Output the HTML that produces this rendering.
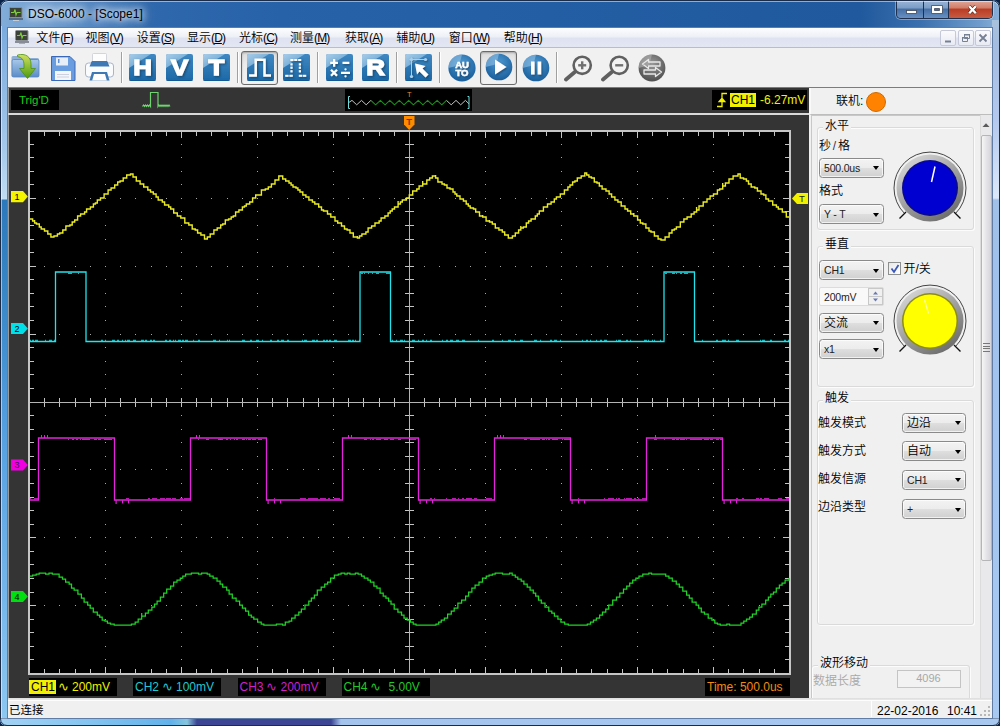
<!DOCTYPE html>
<html lang="zh">
<head>
<meta charset="utf-8">
<title>DSO-6000 - [Scope1]</title>
<style>
*{box-sizing:border-box;margin:0;padding:0}
html,body{width:1000px;height:726px;overflow:hidden;background:#0b2248}
body{font-family:"Liberation Sans","Noto Sans CJK SC",sans-serif;font-size:12px;color:#000;position:relative}
.abs{position:absolute}
#win{position:absolute;left:0;top:0;width:1000px;height:726px;border-radius:8px 8px 7px 7px;
 background:linear-gradient(90deg,#82acd9 0,#6d9cce 5%,#4c82be 10%,#2f68ac 15%,#2761a8 28%,#235da3 55%,#20599d 86%,#3a70ae 92%,#6f9ccc 98%,#8ab0d8 100%);
 overflow:hidden}
#frameL{left:0;top:26px;width:8px;height:700px;background:linear-gradient(180deg,#7aaade 0,#a4c8ea 120px,#c0dcf2 172px,#c4e0f4 173px,#2c78ba 174px,#3e8ccc 300px,#58a2e2 420px,#8ec8f2 100%)}
#frameL:before{content:'';position:absolute;left:1px;top:0;width:1px;height:700px;background:rgba(255,255,255,.5)}
#frameL:after{content:'';position:absolute;left:7px;top:1px;width:1px;height:692px;background:#4a6a94}
#frameR{left:992px;top:20px;width:8px;height:706px;background:linear-gradient(180deg,#a9c2dc 0,#a4bce0 25px,#b4c8ee 100px,#dce8fa 178px,#a0c0ea 180px,#a2c4ee 420px,#a8caf2 100%)}
#frameR:before{content:'';position:absolute;right:0;top:0;width:1px;height:706px;background:#1b2c48}
#frameB{left:1px;top:718px;width:998px;height:8px;border-top:1px solid #7c94b4;border-bottom:1px solid #1b2c48;background:linear-gradient(90deg,#a2d2f4 0,#84c4f0 90px,#62b2ea 170px,#86c6dc 186px,#3c4494 196px,#3c4494 330px,#a4c4ee 340px,#a8c8f0 100%)}
#title{left:28px;top:6px;font-size:12px;line-height:16px;color:#000;text-shadow:0 0 6px #fff,0 0 10px #fff,0 0 14px rgba(255,255,255,.9)}
#client{left:7px;top:27px;width:986px;height:692px;background:#f0f0f0;border:1px solid #5f7ca4}
/* menu */
#menu{left:8px;top:28px;width:984px;height:20px;background:linear-gradient(180deg,#fdfdfe 0,#eef0f8 45%,#dfe3f1 55%,#e3e6f3 100%);border-bottom:1px solid #b8bccb}
#menu span{position:absolute;top:2px;line-height:16px;font-size:12px;white-space:nowrap}
#menu u{text-decoration:underline}
#menu b{font-weight:normal;font-size:12px;letter-spacing:-.9px;position:relative;top:-.5px}
#menu span{font-weight:350}
/* toolbar */
#tool{left:8px;top:48px;width:984px;height:40px;background:#f1f1f2;border-bottom:1px solid #7c7c7c}
.sep{position:absolute;top:4px;width:2px;height:31px;border-left:1px solid #a0a0a0;border-right:1px solid #fff}
.pressed{border:1px solid #6a6a6a;border-radius:3px;background:linear-gradient(180deg,#dcdcdc,#ececec 40%,#f2f2f2);box-shadow:inset 0 1px 2px rgba(0,0,0,.25)}
.mdi{position:absolute;top:30px;width:16px;height:16px;border:1px solid #c4c8d8;border-radius:2px;background:linear-gradient(180deg,#fbfbfd,#e8eaf4)}
.mdi svg{position:absolute;left:0;top:0}
/* scope */
#scope{left:8px;top:88px;width:801px;height:610px;background:#343434}
#scope svg.plot{position:absolute;left:0;top:0}
.lbl{position:absolute;background:#000;height:18px;line-height:18px;font-size:12px;white-space:nowrap}
/* right panel */
#panel{left:809px;top:88px;width:183px;height:610px;background:#f0f0f0}

.cj{font-size:12px;font-weight:350}
.grp{position:absolute;border:1px solid #dadada;border-radius:3px;box-shadow:inset 1px 1px 0 #fcfcfc,1px 1px 0 #fcfcfc}
.gl{position:absolute;background:#f0f0f0;padding:0 2px;line-height:16px}
.combo{position:absolute;width:65px;height:20px;border:1px solid #8a8a8a;border-radius:3.500px;background:linear-gradient(180deg,#f3f3f3 0,#ececec 48%,#dedede 52%,#d0d0d0 100%);box-shadow:inset 0 0 0 1px rgba(255,255,255,.7)}
.combo span{position:absolute;left:4px;top:1px;line-height:16px;font-size:10.500px;letter-spacing:-.2px;color:#222}
.combo.cj span{font-size:12px;letter-spacing:0;color:#000;font-weight:350}
.combo i{position:absolute;right:4.500px;top:7.500px;width:0;height:0;border-left:3.800px solid transparent;border-right:3.800px solid transparent;border-top:4.200px solid #000}
.tl{font-size:13px}
/* status bar */
#status{left:8px;top:698px;width:984px;height:20px;background:linear-gradient(180deg,#dcdcdc 0,#e6e6e6 1.500px,#fdfdfd 2px,#fdfdfd 3px,#f0f0f0 3px)}
#status span{font-weight:350}
</style>
</head>
<body>
<div id="win">
<div id="frameL" class="abs"></div><div id="frameR" class="abs"></div><div id="frameB" class="abs"></div>
<div id="title" class="abs">DSO-6000 - [Scope1]</div>
<div id="client" class="abs"></div>
<div id="menu" class="abs">
<span style="left:28.2px">文件<b>(<u>F</u>)</b></span>
<span style="left:77.5px">视图<b>(<u>V</u>)</b></span>
<span style="left:128.8px">设置<b>(<u>S</u>)</b></span>
<span style="left:179.0px">显示<b>(<u>D</u>)</b></span>
<span style="left:231.0px">光标<b>(<u>C</u>)</b></span>
<span style="left:282.0px">测量<b>(<u>M</u>)</b></span>
<span style="left:337.0px">获取<b>(<u>A</u>)</b></span>
<span style="left:388.2px">辅助<b>(<u>U</u>)</b></span>
<span style="left:440.8px">窗口<b>(<u>W</u>)</b></span>
<span style="left:495.8px">帮助<b>(<u>H</u>)</b></span>
</div>
<div id="tool" class="abs">
<svg width="0" height="0" style="position:absolute"><defs>
<linearGradient id="bq" x1="0" y1="0" x2="0" y2="1"><stop offset="0" stop-color="#3f88c2"/><stop offset="1" stop-color="#1c68a6"/></linearGradient>
<linearGradient id="bq2" x1="0" y1="0" x2="1" y2="1"><stop offset="0" stop-color="#b4d4ec"/><stop offset="1" stop-color="#5a9fd0"/></linearGradient>
<radialGradient id="bc" cx="0.5" cy="0.35" r="0.7"><stop offset="0" stop-color="#4f9ad2"/><stop offset="1" stop-color="#155a98"/></radialGradient>
<radialGradient id="gc" cx="0.5" cy="0.35" r="0.7"><stop offset="0" stop-color="#9a9a9a"/><stop offset="1" stop-color="#4a4a4a"/></radialGradient>
<linearGradient id="fold" x1="0" y1="0" x2="0" y2="1"><stop offset="0" stop-color="#a8c8e8"/><stop offset="1" stop-color="#5a8cc8"/></linearGradient>
<linearGradient id="garr" x1="0" y1="0" x2="0" y2="1"><stop offset="0" stop-color="#d0e060"/><stop offset="1" stop-color="#4c9a10"/></linearGradient>
<filter id="ds" x="-20%" y="-20%" width="150%" height="150%"><feDropShadow dx="1" dy="1.2" stdDeviation="0.8" flood-color="#0a3050" flood-opacity="0.7"/></filter>
<filter id="soft" x="-10%" y="-10%" width="120%" height="120%"><feGaussianBlur stdDeviation="0.6"/></filter>
</defs></svg>
<svg class="abs" style="left:2px;top:3px" width="32" height="30" viewBox="0 0 32 30"><path d="M1.500 6.500a1.500 1.500 0 0 1 1.500-1.500h8l2 2h14.500a1.500 1.500 0 0 1 1.500 1.500v16a1.500 1.500 0 0 1-1.500 1.500h-24.500a1.500 1.500 0 0 1-1.500-1.500z" fill="#8fb0d4"/><rect x="2" y="8.500" width="27" height="17.500" rx="1.500" fill="url(#fold)" stroke="#5a86bc" stroke-width=".8"/><path d="M7.500 4c8-2 13.500 1.500 13.500 9.500v4h4.500l-8 10-8-10h4.500v-3.500c0-5-2-7.500-6.500-8.500z" fill="url(#garr)" stroke="#4a9010" stroke-width=".8"/></svg>
<svg class="abs" style="left:42px;top:7px" width="28" height="28" viewBox="0 0 28 28"><path d="M1.500 1.500h18.500l5 5v19h-23.500z" fill="#6a9ce0" stroke="#3a68b8" stroke-width="1"/><rect x="6" y="2.500" width="12" height="8" fill="#e8eef8"/><rect x="8" y="4" width="1.500" height="4" fill="#5b8fd8"/><rect x="5" y="16" width="16" height="9" fill="#f4f6fa"/><path d="M7 19.500h12M7 22h12" stroke="#c0c8d8" stroke-width=".8"/></svg>
<svg class="abs" style="left:76px;top:4px" width="32" height="30" viewBox="0 0 32 30"><rect x="1.500" y="11" width="28" height="14" rx="3" fill="#fafbfd" stroke="#a8b4c8" stroke-width="1"/><rect x="8.500" y="1.500" width="14" height="9" rx="1" fill="#fdfdfd" stroke="#c8ccd4" stroke-width=".8"/><path d="M7 11c0-1.500 1-2 2-2h13c1 0 2 0.500 2 2l1.500 3.500h-20z" fill="#3d78b4"/><path d="M8 20h15l2.500 8.500h-20z" fill="#3d78b4"/><path d="M10 22h11l1.800 6.500h-14.600z" fill="#fdfdfd"/></svg>
<div class="sep" style="left:112.5px"></div>
<svg class="abs" style="left:118.0px;top:3.0px" width="33" height="33" viewBox="-3 -3 33 33"><rect x="0" y="0" width="27" height="27" rx="2" fill="url(#bq)" filter="url(#soft)"/><path d="M0 2a2 2 0 0 1 2-2h20L0 14z" fill="url(#bq2)" opacity=".9" filter="url(#soft)"/><path d="M0.500 26.500h26" stroke="#0e4f86" stroke-width="1" opacity=".6"/><g transform="translate(13.5 21.4) scale(1.15 1)"><text x="0" y="0" font-family="Liberation Sans, sans-serif" font-weight="bold" font-size="22.5" text-anchor="middle" fill="#fff" stroke="#fff" stroke-width="1.300" filter="url(#ds)">H</text></g></svg>
<svg class="abs" style="left:155.0px;top:3.0px" width="33" height="33" viewBox="-3 -3 33 33"><rect x="0" y="0" width="27" height="27" rx="2" fill="url(#bq)" filter="url(#soft)"/><path d="M0 2a2 2 0 0 1 2-2h20L0 14z" fill="url(#bq2)" opacity=".9" filter="url(#soft)"/><path d="M0.500 26.500h26" stroke="#0e4f86" stroke-width="1" opacity=".6"/><g transform="translate(13.5 21.4) scale(1.15 1)"><text x="0" y="0" font-family="Liberation Sans, sans-serif" font-weight="bold" font-size="22.5" text-anchor="middle" fill="#fff" stroke="#fff" stroke-width="1.300" filter="url(#ds)">V</text></g></svg>
<svg class="abs" style="left:192.0px;top:3.0px" width="33" height="33" viewBox="-3 -3 33 33"><rect x="0" y="0" width="27" height="27" rx="2" fill="url(#bq)" filter="url(#soft)"/><path d="M0 2a2 2 0 0 1 2-2h20L0 14z" fill="url(#bq2)" opacity=".9" filter="url(#soft)"/><path d="M0.500 26.500h26" stroke="#0e4f86" stroke-width="1" opacity=".6"/><g transform="translate(13.5 21.4) scale(1.15 1)"><text x="0" y="0" font-family="Liberation Sans, sans-serif" font-weight="bold" font-size="22.5" text-anchor="middle" fill="#fff" stroke="#fff" stroke-width="1.300" filter="url(#ds)">T</text></g></svg>
<div class="sep" style="left:229.1px"></div>
<div class="abs pressed" style="left:233.0px;top:2.5px;width:37px;height:34px"></div>
<svg class="abs" style="left:236.0px;top:3.0px" width="33" height="33" viewBox="-3 -3 33 33"><rect x="0" y="0" width="27" height="27" rx="2" fill="url(#bq)" filter="url(#soft)"/><path d="M0 2a2 2 0 0 1 2-2h20L0 14z" fill="url(#bq2)" opacity=".9" filter="url(#soft)"/><path d="M0.500 26.500h26" stroke="#0e4f86" stroke-width="1" opacity=".6"/><path d="M2 21.400H8.700V5.800H17.500V21.400H24" fill="none" stroke="#fff" stroke-width="2.500" filter="url(#ds)"/></svg>
<svg class="abs" style="left:272.0px;top:3.0px" width="33" height="33" viewBox="-3 -3 33 33"><rect x="0" y="0" width="27" height="27" rx="2" fill="url(#bq)" filter="url(#soft)"/><path d="M0 2a2 2 0 0 1 2-2h20L0 14z" fill="url(#bq2)" opacity=".9" filter="url(#soft)"/><path d="M0.500 26.500h26" stroke="#0e4f86" stroke-width="1" opacity=".6"/><g filter="url(#ds)" fill="#fff"><rect x="7.400" y="5" width="3" height="2"/><rect x="11.300" y="5" width="3" height="2"/><rect x="15.200" y="5" width="3" height="2"/><rect x="7.400" y="9.300" width="2.200" height="2.200"/><rect x="7.400" y="12.600" width="2.200" height="2.200"/><rect x="7.400" y="16.200" width="2.200" height="2.200"/><rect x="15.800" y="9.300" width="2.200" height="2.200"/><rect x="15.800" y="12.600" width="2.200" height="2.200"/><rect x="15.800" y="16.200" width="2.200" height="2.200"/><rect x="2.200" y="20.800" width="3.400" height="2"/><rect x="6.400" y="20.800" width="3.400" height="2"/><rect x="15.800" y="20.800" width="3.400" height="2"/><rect x="19.800" y="20.800" width="3.400" height="2"/></g></svg>
<div class="sep" style="left:309.1px"></div>
<svg class="abs" style="left:314.5px;top:3.0px" width="33" height="33" viewBox="-3 -3 33 33"><rect x="0" y="0" width="27" height="27" rx="2" fill="url(#bq)" filter="url(#soft)"/><path d="M0 2a2 2 0 0 1 2-2h20L0 14z" fill="url(#bq2)" opacity=".9" filter="url(#soft)"/><path d="M0.500 26.500h26" stroke="#0e4f86" stroke-width="1" opacity=".6"/><g stroke="#fff" stroke-width="2.200" filter="url(#ds)" fill="#fff"><path d="M4.200 8.800h7.800M8.100 4.900v7.800M16.500 8.800h6.800M5 15.800l6 6M11 15.800l-6 6M15 18.800h9"/><circle cx="19.500" cy="15.300" r="1.100" stroke="none"/><circle cx="19.500" cy="22.300" r="1.100" stroke="none"/></g></svg>
<svg class="abs" style="left:351.4px;top:3.0px" width="33" height="33" viewBox="-3 -3 33 33"><rect x="0" y="0" width="27" height="27" rx="2" fill="url(#bq)" filter="url(#soft)"/><path d="M0 2a2 2 0 0 1 2-2h20L0 14z" fill="url(#bq2)" opacity=".9" filter="url(#soft)"/><path d="M0.500 26.500h26" stroke="#0e4f86" stroke-width="1" opacity=".6"/><g transform="translate(13.5 21.4) scale(1.15 1)"><text x="0" y="0" font-family="Liberation Sans, sans-serif" font-weight="bold" font-size="22.5" text-anchor="middle" fill="#fff" stroke="#fff" stroke-width="1.300" filter="url(#ds)">R</text></g></svg>
<div class="sep" style="left:387.9px"></div>
<svg class="abs" style="left:394.0px;top:3.0px" width="33" height="33" viewBox="-3 -3 33 33"><rect x="0" y="0" width="27" height="27" rx="2" fill="url(#bq)" filter="url(#soft)"/><path d="M0 2a2 2 0 0 1 2-2h20L0 14z" fill="url(#bq2)" opacity=".9" filter="url(#soft)"/><path d="M0.500 26.500h26" stroke="#0e4f86" stroke-width="1" opacity=".6"/><g filter="url(#ds)"><path d="M6.500 3.500v20M4.500 5.500h17" stroke="#a8d0ec" stroke-width="1" fill="none"/><circle cx="6.500" cy="5.500" r="1.600" fill="#a8d0ec"/><circle cx="20.500" cy="5.500" r="1.600" fill="#a8d0ec"/><circle cx="6.500" cy="22.500" r="1.600" fill="#a8d0ec"/><path d="M10 9.500l10.500 2.500-3 2.500 6 6-3 3-6-6-2.500 3z" fill="#fff"/></g></svg>
<div class="sep" style="left:431.1px"></div>
<svg class="abs" style="left:438.0px;top:4.3px" width="32" height="32" viewBox="-16 -16 32 32"><circle r="13.6" fill="url(#bc)"/><path d="M-13.60 0.00A13.6 13.6 0 0 1 0.00 -13.60L-2.72 -2.72z" fill="#9cc8ea" opacity=".55"/><g font-family="Liberation Sans, sans-serif" font-weight="bold" font-size="9.500" text-anchor="middle" fill="#fff" stroke="#fff" stroke-width=".5" filter="url(#ds)"><text x="0" y="-0.500">AU</text><text x="0" y="7.500">TO</text></g></svg>
<div class="abs pressed" style="left:472.4px;top:2.5px;width:37px;height:34px"></div>
<svg class="abs" style="left:475.3px;top:3.3px" width="32" height="32" viewBox="-16 -16 32 32"><circle r="13.3" fill="url(#bc)"/><path d="M-13.30 0.00A13.3 13.3 0 0 1 0.00 -13.30L-2.66 -2.66z" fill="#9cc8ea" opacity=".55"/><path d="M-4 -7.500L7.500 0-4 7.500z" fill="#fff" filter="url(#ds)"/></svg>
<svg class="abs" style="left:511.8px;top:4.0px" width="32" height="32" viewBox="-16 -16 32 32"><circle r="13.3" fill="url(#bc)"/><path d="M-13.30 0.00A13.3 13.3 0 0 1 0.00 -13.30L-2.66 -2.66z" fill="#9cc8ea" opacity=".55"/><path d="M-5 -6.500h3.600v13h-3.600zM1.600 -6.500h3.600v13h-3.600z" fill="#fff" filter="url(#ds)"/></svg>
<div class="sep" style="left:548.2px"></div>
<svg class="abs" style="left:555.0px;top:6.0px" width="30" height="28" viewBox="0 0 30 28"><path d="M13 17L3 25.500" stroke="#606060" stroke-width="3.800" stroke-linecap="round"/><circle cx="19.200" cy="11.300" r="8.600" fill="#f2f2f2" stroke="#606060" stroke-width="2.600"/><g transform="translate(19.200 11.300)"><path d="M-4 0h8" stroke="#707070" stroke-width="2.400"/><path d="M0 -4v8" stroke="#707070" stroke-width="2.400"/></g></svg>
<svg class="abs" style="left:591.5px;top:6.0px" width="30" height="28" viewBox="0 0 30 28"><path d="M13 17L3 25.500" stroke="#606060" stroke-width="3.800" stroke-linecap="round"/><circle cx="19.200" cy="11.300" r="8.600" fill="#f2f2f2" stroke="#606060" stroke-width="2.600"/><g transform="translate(19.200 11.300)"><path d="M-4 0h8" stroke="#707070" stroke-width="2.400"/></g></svg>
<svg class="abs" style="left:628.0px;top:3.5px" width="32" height="32" viewBox="-16 -16 32 32"><circle r="13.4" fill="url(#gc)"/><path d="M-13.40 0.00A13.4 13.4 0 0 1 0.00 -13.40L-2.68 -2.68z" fill="#b8b8b8" opacity=".55"/><g fill="none" stroke="#e8e8e8" stroke-width="1.300" stroke-linejoin="round"><path d="M-3.500 -8.500l-6 4.500 6 4.500v-2.500h11.500v-4h-11.500z"/><path d="M3.500 -0.500l6 4.500-6 4.500v-2.500h-11.500v-4h11.500z"/></g></svg>
</div>
<div id="scope" class="abs">
<svg class="plot" width="801" height="610" viewBox="8 88 801 610">
<rect x="28" y="130" width="763" height="545" fill="#000"/>
<g fill="#a8a8a8"><rect x="105" y="144" width="1" height="1"/><rect x="105" y="157" width="1" height="1"/><rect x="105" y="171" width="1" height="1"/><rect x="105" y="184" width="1" height="1"/><rect x="105" y="198" width="1" height="1"/><rect x="105" y="211" width="1" height="1"/><rect x="105" y="225" width="1" height="1"/><rect x="105" y="239" width="1" height="1"/><rect x="105" y="252" width="1" height="1"/><rect x="105" y="266" width="1" height="1"/><rect x="105" y="279" width="1" height="1"/><rect x="105" y="293" width="1" height="1"/><rect x="105" y="306" width="1" height="1"/><rect x="105" y="320" width="1" height="1"/><rect x="105" y="334" width="1" height="1"/><rect x="105" y="347" width="1" height="1"/><rect x="105" y="361" width="1" height="1"/><rect x="105" y="374" width="1" height="1"/><rect x="105" y="388" width="1" height="1"/><rect x="105" y="402" width="1" height="1"/><rect x="105" y="415" width="1" height="1"/><rect x="105" y="429" width="1" height="1"/><rect x="105" y="442" width="1" height="1"/><rect x="105" y="456" width="1" height="1"/><rect x="105" y="469" width="1" height="1"/><rect x="105" y="483" width="1" height="1"/><rect x="105" y="497" width="1" height="1"/><rect x="105" y="510" width="1" height="1"/><rect x="105" y="524" width="1" height="1"/><rect x="105" y="537" width="1" height="1"/><rect x="105" y="551" width="1" height="1"/><rect x="105" y="564" width="1" height="1"/><rect x="105" y="578" width="1" height="1"/><rect x="105" y="592" width="1" height="1"/><rect x="105" y="605" width="1" height="1"/><rect x="105" y="619" width="1" height="1"/><rect x="105" y="632" width="1" height="1"/><rect x="105" y="646" width="1" height="1"/><rect x="105" y="659" width="1" height="1"/><rect x="181" y="144" width="1" height="1"/><rect x="181" y="157" width="1" height="1"/><rect x="181" y="171" width="1" height="1"/><rect x="181" y="184" width="1" height="1"/><rect x="181" y="198" width="1" height="1"/><rect x="181" y="211" width="1" height="1"/><rect x="181" y="225" width="1" height="1"/><rect x="181" y="239" width="1" height="1"/><rect x="181" y="252" width="1" height="1"/><rect x="181" y="266" width="1" height="1"/><rect x="181" y="279" width="1" height="1"/><rect x="181" y="293" width="1" height="1"/><rect x="181" y="306" width="1" height="1"/><rect x="181" y="320" width="1" height="1"/><rect x="181" y="334" width="1" height="1"/><rect x="181" y="347" width="1" height="1"/><rect x="181" y="361" width="1" height="1"/><rect x="181" y="374" width="1" height="1"/><rect x="181" y="388" width="1" height="1"/><rect x="181" y="402" width="1" height="1"/><rect x="181" y="415" width="1" height="1"/><rect x="181" y="429" width="1" height="1"/><rect x="181" y="442" width="1" height="1"/><rect x="181" y="456" width="1" height="1"/><rect x="181" y="469" width="1" height="1"/><rect x="181" y="483" width="1" height="1"/><rect x="181" y="497" width="1" height="1"/><rect x="181" y="510" width="1" height="1"/><rect x="181" y="524" width="1" height="1"/><rect x="181" y="537" width="1" height="1"/><rect x="181" y="551" width="1" height="1"/><rect x="181" y="564" width="1" height="1"/><rect x="181" y="578" width="1" height="1"/><rect x="181" y="592" width="1" height="1"/><rect x="181" y="605" width="1" height="1"/><rect x="181" y="619" width="1" height="1"/><rect x="181" y="632" width="1" height="1"/><rect x="181" y="646" width="1" height="1"/><rect x="181" y="659" width="1" height="1"/><rect x="257" y="144" width="1" height="1"/><rect x="257" y="157" width="1" height="1"/><rect x="257" y="171" width="1" height="1"/><rect x="257" y="184" width="1" height="1"/><rect x="257" y="198" width="1" height="1"/><rect x="257" y="211" width="1" height="1"/><rect x="257" y="225" width="1" height="1"/><rect x="257" y="239" width="1" height="1"/><rect x="257" y="252" width="1" height="1"/><rect x="257" y="266" width="1" height="1"/><rect x="257" y="279" width="1" height="1"/><rect x="257" y="293" width="1" height="1"/><rect x="257" y="306" width="1" height="1"/><rect x="257" y="320" width="1" height="1"/><rect x="257" y="334" width="1" height="1"/><rect x="257" y="347" width="1" height="1"/><rect x="257" y="361" width="1" height="1"/><rect x="257" y="374" width="1" height="1"/><rect x="257" y="388" width="1" height="1"/><rect x="257" y="402" width="1" height="1"/><rect x="257" y="415" width="1" height="1"/><rect x="257" y="429" width="1" height="1"/><rect x="257" y="442" width="1" height="1"/><rect x="257" y="456" width="1" height="1"/><rect x="257" y="469" width="1" height="1"/><rect x="257" y="483" width="1" height="1"/><rect x="257" y="497" width="1" height="1"/><rect x="257" y="510" width="1" height="1"/><rect x="257" y="524" width="1" height="1"/><rect x="257" y="537" width="1" height="1"/><rect x="257" y="551" width="1" height="1"/><rect x="257" y="564" width="1" height="1"/><rect x="257" y="578" width="1" height="1"/><rect x="257" y="592" width="1" height="1"/><rect x="257" y="605" width="1" height="1"/><rect x="257" y="619" width="1" height="1"/><rect x="257" y="632" width="1" height="1"/><rect x="257" y="646" width="1" height="1"/><rect x="257" y="659" width="1" height="1"/><rect x="333" y="144" width="1" height="1"/><rect x="333" y="157" width="1" height="1"/><rect x="333" y="171" width="1" height="1"/><rect x="333" y="184" width="1" height="1"/><rect x="333" y="198" width="1" height="1"/><rect x="333" y="211" width="1" height="1"/><rect x="333" y="225" width="1" height="1"/><rect x="333" y="239" width="1" height="1"/><rect x="333" y="252" width="1" height="1"/><rect x="333" y="266" width="1" height="1"/><rect x="333" y="279" width="1" height="1"/><rect x="333" y="293" width="1" height="1"/><rect x="333" y="306" width="1" height="1"/><rect x="333" y="320" width="1" height="1"/><rect x="333" y="334" width="1" height="1"/><rect x="333" y="347" width="1" height="1"/><rect x="333" y="361" width="1" height="1"/><rect x="333" y="374" width="1" height="1"/><rect x="333" y="388" width="1" height="1"/><rect x="333" y="402" width="1" height="1"/><rect x="333" y="415" width="1" height="1"/><rect x="333" y="429" width="1" height="1"/><rect x="333" y="442" width="1" height="1"/><rect x="333" y="456" width="1" height="1"/><rect x="333" y="469" width="1" height="1"/><rect x="333" y="483" width="1" height="1"/><rect x="333" y="497" width="1" height="1"/><rect x="333" y="510" width="1" height="1"/><rect x="333" y="524" width="1" height="1"/><rect x="333" y="537" width="1" height="1"/><rect x="333" y="551" width="1" height="1"/><rect x="333" y="564" width="1" height="1"/><rect x="333" y="578" width="1" height="1"/><rect x="333" y="592" width="1" height="1"/><rect x="333" y="605" width="1" height="1"/><rect x="333" y="619" width="1" height="1"/><rect x="333" y="632" width="1" height="1"/><rect x="333" y="646" width="1" height="1"/><rect x="333" y="659" width="1" height="1"/><rect x="485" y="144" width="1" height="1"/><rect x="485" y="157" width="1" height="1"/><rect x="485" y="171" width="1" height="1"/><rect x="485" y="184" width="1" height="1"/><rect x="485" y="198" width="1" height="1"/><rect x="485" y="211" width="1" height="1"/><rect x="485" y="225" width="1" height="1"/><rect x="485" y="239" width="1" height="1"/><rect x="485" y="252" width="1" height="1"/><rect x="485" y="266" width="1" height="1"/><rect x="485" y="279" width="1" height="1"/><rect x="485" y="293" width="1" height="1"/><rect x="485" y="306" width="1" height="1"/><rect x="485" y="320" width="1" height="1"/><rect x="485" y="334" width="1" height="1"/><rect x="485" y="347" width="1" height="1"/><rect x="485" y="361" width="1" height="1"/><rect x="485" y="374" width="1" height="1"/><rect x="485" y="388" width="1" height="1"/><rect x="485" y="402" width="1" height="1"/><rect x="485" y="415" width="1" height="1"/><rect x="485" y="429" width="1" height="1"/><rect x="485" y="442" width="1" height="1"/><rect x="485" y="456" width="1" height="1"/><rect x="485" y="469" width="1" height="1"/><rect x="485" y="483" width="1" height="1"/><rect x="485" y="497" width="1" height="1"/><rect x="485" y="510" width="1" height="1"/><rect x="485" y="524" width="1" height="1"/><rect x="485" y="537" width="1" height="1"/><rect x="485" y="551" width="1" height="1"/><rect x="485" y="564" width="1" height="1"/><rect x="485" y="578" width="1" height="1"/><rect x="485" y="592" width="1" height="1"/><rect x="485" y="605" width="1" height="1"/><rect x="485" y="619" width="1" height="1"/><rect x="485" y="632" width="1" height="1"/><rect x="485" y="646" width="1" height="1"/><rect x="485" y="659" width="1" height="1"/><rect x="561" y="144" width="1" height="1"/><rect x="561" y="157" width="1" height="1"/><rect x="561" y="171" width="1" height="1"/><rect x="561" y="184" width="1" height="1"/><rect x="561" y="198" width="1" height="1"/><rect x="561" y="211" width="1" height="1"/><rect x="561" y="225" width="1" height="1"/><rect x="561" y="239" width="1" height="1"/><rect x="561" y="252" width="1" height="1"/><rect x="561" y="266" width="1" height="1"/><rect x="561" y="279" width="1" height="1"/><rect x="561" y="293" width="1" height="1"/><rect x="561" y="306" width="1" height="1"/><rect x="561" y="320" width="1" height="1"/><rect x="561" y="334" width="1" height="1"/><rect x="561" y="347" width="1" height="1"/><rect x="561" y="361" width="1" height="1"/><rect x="561" y="374" width="1" height="1"/><rect x="561" y="388" width="1" height="1"/><rect x="561" y="402" width="1" height="1"/><rect x="561" y="415" width="1" height="1"/><rect x="561" y="429" width="1" height="1"/><rect x="561" y="442" width="1" height="1"/><rect x="561" y="456" width="1" height="1"/><rect x="561" y="469" width="1" height="1"/><rect x="561" y="483" width="1" height="1"/><rect x="561" y="497" width="1" height="1"/><rect x="561" y="510" width="1" height="1"/><rect x="561" y="524" width="1" height="1"/><rect x="561" y="537" width="1" height="1"/><rect x="561" y="551" width="1" height="1"/><rect x="561" y="564" width="1" height="1"/><rect x="561" y="578" width="1" height="1"/><rect x="561" y="592" width="1" height="1"/><rect x="561" y="605" width="1" height="1"/><rect x="561" y="619" width="1" height="1"/><rect x="561" y="632" width="1" height="1"/><rect x="561" y="646" width="1" height="1"/><rect x="561" y="659" width="1" height="1"/><rect x="637" y="144" width="1" height="1"/><rect x="637" y="157" width="1" height="1"/><rect x="637" y="171" width="1" height="1"/><rect x="637" y="184" width="1" height="1"/><rect x="637" y="198" width="1" height="1"/><rect x="637" y="211" width="1" height="1"/><rect x="637" y="225" width="1" height="1"/><rect x="637" y="239" width="1" height="1"/><rect x="637" y="252" width="1" height="1"/><rect x="637" y="266" width="1" height="1"/><rect x="637" y="279" width="1" height="1"/><rect x="637" y="293" width="1" height="1"/><rect x="637" y="306" width="1" height="1"/><rect x="637" y="320" width="1" height="1"/><rect x="637" y="334" width="1" height="1"/><rect x="637" y="347" width="1" height="1"/><rect x="637" y="361" width="1" height="1"/><rect x="637" y="374" width="1" height="1"/><rect x="637" y="388" width="1" height="1"/><rect x="637" y="402" width="1" height="1"/><rect x="637" y="415" width="1" height="1"/><rect x="637" y="429" width="1" height="1"/><rect x="637" y="442" width="1" height="1"/><rect x="637" y="456" width="1" height="1"/><rect x="637" y="469" width="1" height="1"/><rect x="637" y="483" width="1" height="1"/><rect x="637" y="497" width="1" height="1"/><rect x="637" y="510" width="1" height="1"/><rect x="637" y="524" width="1" height="1"/><rect x="637" y="537" width="1" height="1"/><rect x="637" y="551" width="1" height="1"/><rect x="637" y="564" width="1" height="1"/><rect x="637" y="578" width="1" height="1"/><rect x="637" y="592" width="1" height="1"/><rect x="637" y="605" width="1" height="1"/><rect x="637" y="619" width="1" height="1"/><rect x="637" y="632" width="1" height="1"/><rect x="637" y="646" width="1" height="1"/><rect x="637" y="659" width="1" height="1"/><rect x="713" y="144" width="1" height="1"/><rect x="713" y="157" width="1" height="1"/><rect x="713" y="171" width="1" height="1"/><rect x="713" y="184" width="1" height="1"/><rect x="713" y="198" width="1" height="1"/><rect x="713" y="211" width="1" height="1"/><rect x="713" y="225" width="1" height="1"/><rect x="713" y="239" width="1" height="1"/><rect x="713" y="252" width="1" height="1"/><rect x="713" y="266" width="1" height="1"/><rect x="713" y="279" width="1" height="1"/><rect x="713" y="293" width="1" height="1"/><rect x="713" y="306" width="1" height="1"/><rect x="713" y="320" width="1" height="1"/><rect x="713" y="334" width="1" height="1"/><rect x="713" y="347" width="1" height="1"/><rect x="713" y="361" width="1" height="1"/><rect x="713" y="374" width="1" height="1"/><rect x="713" y="388" width="1" height="1"/><rect x="713" y="402" width="1" height="1"/><rect x="713" y="415" width="1" height="1"/><rect x="713" y="429" width="1" height="1"/><rect x="713" y="442" width="1" height="1"/><rect x="713" y="456" width="1" height="1"/><rect x="713" y="469" width="1" height="1"/><rect x="713" y="483" width="1" height="1"/><rect x="713" y="497" width="1" height="1"/><rect x="713" y="510" width="1" height="1"/><rect x="713" y="524" width="1" height="1"/><rect x="713" y="537" width="1" height="1"/><rect x="713" y="551" width="1" height="1"/><rect x="713" y="564" width="1" height="1"/><rect x="713" y="578" width="1" height="1"/><rect x="713" y="592" width="1" height="1"/><rect x="713" y="605" width="1" height="1"/><rect x="713" y="619" width="1" height="1"/><rect x="713" y="632" width="1" height="1"/><rect x="713" y="646" width="1" height="1"/><rect x="713" y="659" width="1" height="1"/><rect x="44" y="198" width="1" height="1"/><rect x="59" y="198" width="1" height="1"/><rect x="75" y="198" width="1" height="1"/><rect x="90" y="198" width="1" height="1"/><rect x="120" y="198" width="1" height="1"/><rect x="135" y="198" width="1" height="1"/><rect x="151" y="198" width="1" height="1"/><rect x="166" y="198" width="1" height="1"/><rect x="196" y="198" width="1" height="1"/><rect x="211" y="198" width="1" height="1"/><rect x="227" y="198" width="1" height="1"/><rect x="242" y="198" width="1" height="1"/><rect x="272" y="198" width="1" height="1"/><rect x="287" y="198" width="1" height="1"/><rect x="303" y="198" width="1" height="1"/><rect x="318" y="198" width="1" height="1"/><rect x="348" y="198" width="1" height="1"/><rect x="363" y="198" width="1" height="1"/><rect x="379" y="198" width="1" height="1"/><rect x="394" y="198" width="1" height="1"/><rect x="424" y="198" width="1" height="1"/><rect x="439" y="198" width="1" height="1"/><rect x="455" y="198" width="1" height="1"/><rect x="470" y="198" width="1" height="1"/><rect x="500" y="198" width="1" height="1"/><rect x="515" y="198" width="1" height="1"/><rect x="531" y="198" width="1" height="1"/><rect x="546" y="198" width="1" height="1"/><rect x="576" y="198" width="1" height="1"/><rect x="591" y="198" width="1" height="1"/><rect x="607" y="198" width="1" height="1"/><rect x="622" y="198" width="1" height="1"/><rect x="652" y="198" width="1" height="1"/><rect x="667" y="198" width="1" height="1"/><rect x="683" y="198" width="1" height="1"/><rect x="698" y="198" width="1" height="1"/><rect x="728" y="198" width="1" height="1"/><rect x="743" y="198" width="1" height="1"/><rect x="759" y="198" width="1" height="1"/><rect x="774" y="198" width="1" height="1"/><rect x="44" y="266" width="1" height="1"/><rect x="59" y="266" width="1" height="1"/><rect x="75" y="266" width="1" height="1"/><rect x="90" y="266" width="1" height="1"/><rect x="120" y="266" width="1" height="1"/><rect x="135" y="266" width="1" height="1"/><rect x="151" y="266" width="1" height="1"/><rect x="166" y="266" width="1" height="1"/><rect x="196" y="266" width="1" height="1"/><rect x="211" y="266" width="1" height="1"/><rect x="227" y="266" width="1" height="1"/><rect x="242" y="266" width="1" height="1"/><rect x="272" y="266" width="1" height="1"/><rect x="287" y="266" width="1" height="1"/><rect x="303" y="266" width="1" height="1"/><rect x="318" y="266" width="1" height="1"/><rect x="348" y="266" width="1" height="1"/><rect x="363" y="266" width="1" height="1"/><rect x="379" y="266" width="1" height="1"/><rect x="394" y="266" width="1" height="1"/><rect x="424" y="266" width="1" height="1"/><rect x="439" y="266" width="1" height="1"/><rect x="455" y="266" width="1" height="1"/><rect x="470" y="266" width="1" height="1"/><rect x="500" y="266" width="1" height="1"/><rect x="515" y="266" width="1" height="1"/><rect x="531" y="266" width="1" height="1"/><rect x="546" y="266" width="1" height="1"/><rect x="576" y="266" width="1" height="1"/><rect x="591" y="266" width="1" height="1"/><rect x="607" y="266" width="1" height="1"/><rect x="622" y="266" width="1" height="1"/><rect x="652" y="266" width="1" height="1"/><rect x="667" y="266" width="1" height="1"/><rect x="683" y="266" width="1" height="1"/><rect x="698" y="266" width="1" height="1"/><rect x="728" y="266" width="1" height="1"/><rect x="743" y="266" width="1" height="1"/><rect x="759" y="266" width="1" height="1"/><rect x="774" y="266" width="1" height="1"/><rect x="44" y="334" width="1" height="1"/><rect x="59" y="334" width="1" height="1"/><rect x="75" y="334" width="1" height="1"/><rect x="90" y="334" width="1" height="1"/><rect x="120" y="334" width="1" height="1"/><rect x="135" y="334" width="1" height="1"/><rect x="151" y="334" width="1" height="1"/><rect x="166" y="334" width="1" height="1"/><rect x="196" y="334" width="1" height="1"/><rect x="211" y="334" width="1" height="1"/><rect x="227" y="334" width="1" height="1"/><rect x="242" y="334" width="1" height="1"/><rect x="272" y="334" width="1" height="1"/><rect x="287" y="334" width="1" height="1"/><rect x="303" y="334" width="1" height="1"/><rect x="318" y="334" width="1" height="1"/><rect x="348" y="334" width="1" height="1"/><rect x="363" y="334" width="1" height="1"/><rect x="379" y="334" width="1" height="1"/><rect x="394" y="334" width="1" height="1"/><rect x="424" y="334" width="1" height="1"/><rect x="439" y="334" width="1" height="1"/><rect x="455" y="334" width="1" height="1"/><rect x="470" y="334" width="1" height="1"/><rect x="500" y="334" width="1" height="1"/><rect x="515" y="334" width="1" height="1"/><rect x="531" y="334" width="1" height="1"/><rect x="546" y="334" width="1" height="1"/><rect x="576" y="334" width="1" height="1"/><rect x="591" y="334" width="1" height="1"/><rect x="607" y="334" width="1" height="1"/><rect x="622" y="334" width="1" height="1"/><rect x="652" y="334" width="1" height="1"/><rect x="667" y="334" width="1" height="1"/><rect x="683" y="334" width="1" height="1"/><rect x="698" y="334" width="1" height="1"/><rect x="728" y="334" width="1" height="1"/><rect x="743" y="334" width="1" height="1"/><rect x="759" y="334" width="1" height="1"/><rect x="774" y="334" width="1" height="1"/><rect x="44" y="469" width="1" height="1"/><rect x="59" y="469" width="1" height="1"/><rect x="75" y="469" width="1" height="1"/><rect x="90" y="469" width="1" height="1"/><rect x="120" y="469" width="1" height="1"/><rect x="135" y="469" width="1" height="1"/><rect x="151" y="469" width="1" height="1"/><rect x="166" y="469" width="1" height="1"/><rect x="196" y="469" width="1" height="1"/><rect x="211" y="469" width="1" height="1"/><rect x="227" y="469" width="1" height="1"/><rect x="242" y="469" width="1" height="1"/><rect x="272" y="469" width="1" height="1"/><rect x="287" y="469" width="1" height="1"/><rect x="303" y="469" width="1" height="1"/><rect x="318" y="469" width="1" height="1"/><rect x="348" y="469" width="1" height="1"/><rect x="363" y="469" width="1" height="1"/><rect x="379" y="469" width="1" height="1"/><rect x="394" y="469" width="1" height="1"/><rect x="424" y="469" width="1" height="1"/><rect x="439" y="469" width="1" height="1"/><rect x="455" y="469" width="1" height="1"/><rect x="470" y="469" width="1" height="1"/><rect x="500" y="469" width="1" height="1"/><rect x="515" y="469" width="1" height="1"/><rect x="531" y="469" width="1" height="1"/><rect x="546" y="469" width="1" height="1"/><rect x="576" y="469" width="1" height="1"/><rect x="591" y="469" width="1" height="1"/><rect x="607" y="469" width="1" height="1"/><rect x="622" y="469" width="1" height="1"/><rect x="652" y="469" width="1" height="1"/><rect x="667" y="469" width="1" height="1"/><rect x="683" y="469" width="1" height="1"/><rect x="698" y="469" width="1" height="1"/><rect x="728" y="469" width="1" height="1"/><rect x="743" y="469" width="1" height="1"/><rect x="759" y="469" width="1" height="1"/><rect x="774" y="469" width="1" height="1"/><rect x="44" y="537" width="1" height="1"/><rect x="59" y="537" width="1" height="1"/><rect x="75" y="537" width="1" height="1"/><rect x="90" y="537" width="1" height="1"/><rect x="120" y="537" width="1" height="1"/><rect x="135" y="537" width="1" height="1"/><rect x="151" y="537" width="1" height="1"/><rect x="166" y="537" width="1" height="1"/><rect x="196" y="537" width="1" height="1"/><rect x="211" y="537" width="1" height="1"/><rect x="227" y="537" width="1" height="1"/><rect x="242" y="537" width="1" height="1"/><rect x="272" y="537" width="1" height="1"/><rect x="287" y="537" width="1" height="1"/><rect x="303" y="537" width="1" height="1"/><rect x="318" y="537" width="1" height="1"/><rect x="348" y="537" width="1" height="1"/><rect x="363" y="537" width="1" height="1"/><rect x="379" y="537" width="1" height="1"/><rect x="394" y="537" width="1" height="1"/><rect x="424" y="537" width="1" height="1"/><rect x="439" y="537" width="1" height="1"/><rect x="455" y="537" width="1" height="1"/><rect x="470" y="537" width="1" height="1"/><rect x="500" y="537" width="1" height="1"/><rect x="515" y="537" width="1" height="1"/><rect x="531" y="537" width="1" height="1"/><rect x="546" y="537" width="1" height="1"/><rect x="576" y="537" width="1" height="1"/><rect x="591" y="537" width="1" height="1"/><rect x="607" y="537" width="1" height="1"/><rect x="622" y="537" width="1" height="1"/><rect x="652" y="537" width="1" height="1"/><rect x="667" y="537" width="1" height="1"/><rect x="683" y="537" width="1" height="1"/><rect x="698" y="537" width="1" height="1"/><rect x="728" y="537" width="1" height="1"/><rect x="743" y="537" width="1" height="1"/><rect x="759" y="537" width="1" height="1"/><rect x="774" y="537" width="1" height="1"/><rect x="44" y="605" width="1" height="1"/><rect x="59" y="605" width="1" height="1"/><rect x="75" y="605" width="1" height="1"/><rect x="90" y="605" width="1" height="1"/><rect x="120" y="605" width="1" height="1"/><rect x="135" y="605" width="1" height="1"/><rect x="151" y="605" width="1" height="1"/><rect x="166" y="605" width="1" height="1"/><rect x="196" y="605" width="1" height="1"/><rect x="211" y="605" width="1" height="1"/><rect x="227" y="605" width="1" height="1"/><rect x="242" y="605" width="1" height="1"/><rect x="272" y="605" width="1" height="1"/><rect x="287" y="605" width="1" height="1"/><rect x="303" y="605" width="1" height="1"/><rect x="318" y="605" width="1" height="1"/><rect x="348" y="605" width="1" height="1"/><rect x="363" y="605" width="1" height="1"/><rect x="379" y="605" width="1" height="1"/><rect x="394" y="605" width="1" height="1"/><rect x="424" y="605" width="1" height="1"/><rect x="439" y="605" width="1" height="1"/><rect x="455" y="605" width="1" height="1"/><rect x="470" y="605" width="1" height="1"/><rect x="500" y="605" width="1" height="1"/><rect x="515" y="605" width="1" height="1"/><rect x="531" y="605" width="1" height="1"/><rect x="546" y="605" width="1" height="1"/><rect x="576" y="605" width="1" height="1"/><rect x="591" y="605" width="1" height="1"/><rect x="607" y="605" width="1" height="1"/><rect x="622" y="605" width="1" height="1"/><rect x="652" y="605" width="1" height="1"/><rect x="667" y="605" width="1" height="1"/><rect x="683" y="605" width="1" height="1"/><rect x="698" y="605" width="1" height="1"/><rect x="728" y="605" width="1" height="1"/><rect x="743" y="605" width="1" height="1"/><rect x="759" y="605" width="1" height="1"/><rect x="774" y="605" width="1" height="1"/></g>
<g stroke="#c4c4c4" stroke-width="1" shape-rendering="crispEdges"><path d="M44.5 132v4"/><path d="M44.5 673v-4"/><path d="M44.5 398.0v9"/><path d="M59.5 132v4"/><path d="M59.5 673v-4"/><path d="M59.5 398.0v9"/><path d="M75.5 132v4"/><path d="M75.5 673v-4"/><path d="M75.5 398.0v9"/><path d="M90.5 132v4"/><path d="M90.5 673v-4"/><path d="M90.5 398.0v9"/><path d="M105.5 132v6"/><path d="M105.5 673v-6"/><path d="M105.5 398.0v9"/><path d="M120.5 132v4"/><path d="M120.5 673v-4"/><path d="M120.5 398.0v9"/><path d="M135.5 132v4"/><path d="M135.5 673v-4"/><path d="M135.5 398.0v9"/><path d="M151.5 132v4"/><path d="M151.5 673v-4"/><path d="M151.5 398.0v9"/><path d="M166.5 132v4"/><path d="M166.5 673v-4"/><path d="M166.5 398.0v9"/><path d="M181.5 132v6"/><path d="M181.5 673v-6"/><path d="M181.5 398.0v9"/><path d="M196.5 132v4"/><path d="M196.5 673v-4"/><path d="M196.5 398.0v9"/><path d="M211.5 132v4"/><path d="M211.5 673v-4"/><path d="M211.5 398.0v9"/><path d="M227.5 132v4"/><path d="M227.5 673v-4"/><path d="M227.5 398.0v9"/><path d="M242.5 132v4"/><path d="M242.5 673v-4"/><path d="M242.5 398.0v9"/><path d="M257.5 132v6"/><path d="M257.5 673v-6"/><path d="M257.5 398.0v9"/><path d="M272.5 132v4"/><path d="M272.5 673v-4"/><path d="M272.5 398.0v9"/><path d="M287.5 132v4"/><path d="M287.5 673v-4"/><path d="M287.5 398.0v9"/><path d="M303.5 132v4"/><path d="M303.5 673v-4"/><path d="M303.5 398.0v9"/><path d="M318.5 132v4"/><path d="M318.5 673v-4"/><path d="M318.5 398.0v9"/><path d="M333.5 132v6"/><path d="M333.5 673v-6"/><path d="M333.5 398.0v9"/><path d="M348.5 132v4"/><path d="M348.5 673v-4"/><path d="M348.5 398.0v9"/><path d="M363.5 132v4"/><path d="M363.5 673v-4"/><path d="M363.5 398.0v9"/><path d="M379.5 132v4"/><path d="M379.5 673v-4"/><path d="M379.5 398.0v9"/><path d="M394.5 132v4"/><path d="M394.5 673v-4"/><path d="M394.5 398.0v9"/><path d="M409.5 132v6"/><path d="M409.5 673v-6"/><path d="M409.5 398.0v9"/><path d="M424.5 132v4"/><path d="M424.5 673v-4"/><path d="M424.5 398.0v9"/><path d="M439.5 132v4"/><path d="M439.5 673v-4"/><path d="M439.5 398.0v9"/><path d="M455.5 132v4"/><path d="M455.5 673v-4"/><path d="M455.5 398.0v9"/><path d="M470.5 132v4"/><path d="M470.5 673v-4"/><path d="M470.5 398.0v9"/><path d="M485.5 132v6"/><path d="M485.5 673v-6"/><path d="M485.5 398.0v9"/><path d="M500.5 132v4"/><path d="M500.5 673v-4"/><path d="M500.5 398.0v9"/><path d="M515.5 132v4"/><path d="M515.5 673v-4"/><path d="M515.5 398.0v9"/><path d="M531.5 132v4"/><path d="M531.5 673v-4"/><path d="M531.5 398.0v9"/><path d="M546.5 132v4"/><path d="M546.5 673v-4"/><path d="M546.5 398.0v9"/><path d="M561.5 132v6"/><path d="M561.5 673v-6"/><path d="M561.5 398.0v9"/><path d="M576.5 132v4"/><path d="M576.5 673v-4"/><path d="M576.5 398.0v9"/><path d="M591.5 132v4"/><path d="M591.5 673v-4"/><path d="M591.5 398.0v9"/><path d="M607.5 132v4"/><path d="M607.5 673v-4"/><path d="M607.5 398.0v9"/><path d="M622.5 132v4"/><path d="M622.5 673v-4"/><path d="M622.5 398.0v9"/><path d="M637.5 132v6"/><path d="M637.5 673v-6"/><path d="M637.5 398.0v9"/><path d="M652.5 132v4"/><path d="M652.5 673v-4"/><path d="M652.5 398.0v9"/><path d="M667.5 132v4"/><path d="M667.5 673v-4"/><path d="M667.5 398.0v9"/><path d="M683.5 132v4"/><path d="M683.5 673v-4"/><path d="M683.5 398.0v9"/><path d="M698.5 132v4"/><path d="M698.5 673v-4"/><path d="M698.5 398.0v9"/><path d="M713.5 132v6"/><path d="M713.5 673v-6"/><path d="M713.5 398.0v9"/><path d="M728.5 132v4"/><path d="M728.5 673v-4"/><path d="M728.5 398.0v9"/><path d="M743.5 132v4"/><path d="M743.5 673v-4"/><path d="M743.5 398.0v9"/><path d="M759.5 132v4"/><path d="M759.5 673v-4"/><path d="M759.5 398.0v9"/><path d="M774.5 132v4"/><path d="M774.5 673v-4"/><path d="M774.5 398.0v9"/><path d="M30 144.5h4"/><path d="M789 144.5h-4"/><path d="M405.0 144.5h9"/><path d="M30 157.5h4"/><path d="M789 157.5h-4"/><path d="M405.0 157.5h9"/><path d="M30 171.5h4"/><path d="M789 171.5h-4"/><path d="M405.0 171.5h9"/><path d="M30 184.5h4"/><path d="M789 184.5h-4"/><path d="M405.0 184.5h9"/><path d="M30 198.5h6"/><path d="M789 198.5h-6"/><path d="M405.0 198.5h9"/><path d="M30 211.5h4"/><path d="M789 211.5h-4"/><path d="M405.0 211.5h9"/><path d="M30 225.5h4"/><path d="M789 225.5h-4"/><path d="M405.0 225.5h9"/><path d="M30 239.5h4"/><path d="M789 239.5h-4"/><path d="M405.0 239.5h9"/><path d="M30 252.5h4"/><path d="M789 252.5h-4"/><path d="M405.0 252.5h9"/><path d="M30 266.5h6"/><path d="M789 266.5h-6"/><path d="M405.0 266.5h9"/><path d="M30 279.5h4"/><path d="M789 279.5h-4"/><path d="M405.0 279.5h9"/><path d="M30 293.5h4"/><path d="M789 293.5h-4"/><path d="M405.0 293.5h9"/><path d="M30 306.5h4"/><path d="M789 306.5h-4"/><path d="M405.0 306.5h9"/><path d="M30 320.5h4"/><path d="M789 320.5h-4"/><path d="M405.0 320.5h9"/><path d="M30 334.5h6"/><path d="M789 334.5h-6"/><path d="M405.0 334.5h9"/><path d="M30 347.5h4"/><path d="M789 347.5h-4"/><path d="M405.0 347.5h9"/><path d="M30 361.5h4"/><path d="M789 361.5h-4"/><path d="M405.0 361.5h9"/><path d="M30 374.5h4"/><path d="M789 374.5h-4"/><path d="M405.0 374.5h9"/><path d="M30 388.5h4"/><path d="M789 388.5h-4"/><path d="M405.0 388.5h9"/><path d="M30 402.5h6"/><path d="M789 402.5h-6"/><path d="M405.0 402.5h9"/><path d="M30 415.5h4"/><path d="M789 415.5h-4"/><path d="M405.0 415.5h9"/><path d="M30 429.5h4"/><path d="M789 429.5h-4"/><path d="M405.0 429.5h9"/><path d="M30 442.5h4"/><path d="M789 442.5h-4"/><path d="M405.0 442.5h9"/><path d="M30 456.5h4"/><path d="M789 456.5h-4"/><path d="M405.0 456.5h9"/><path d="M30 469.5h6"/><path d="M789 469.5h-6"/><path d="M405.0 469.5h9"/><path d="M30 483.5h4"/><path d="M789 483.5h-4"/><path d="M405.0 483.5h9"/><path d="M30 497.5h4"/><path d="M789 497.5h-4"/><path d="M405.0 497.5h9"/><path d="M30 510.5h4"/><path d="M789 510.5h-4"/><path d="M405.0 510.5h9"/><path d="M30 524.5h4"/><path d="M789 524.5h-4"/><path d="M405.0 524.5h9"/><path d="M30 537.5h6"/><path d="M789 537.5h-6"/><path d="M405.0 537.5h9"/><path d="M30 551.5h4"/><path d="M789 551.5h-4"/><path d="M405.0 551.5h9"/><path d="M30 564.5h4"/><path d="M789 564.5h-4"/><path d="M405.0 564.5h9"/><path d="M30 578.5h4"/><path d="M789 578.5h-4"/><path d="M405.0 578.5h9"/><path d="M30 592.5h4"/><path d="M789 592.5h-4"/><path d="M405.0 592.5h9"/><path d="M30 605.5h6"/><path d="M789 605.5h-6"/><path d="M405.0 605.5h9"/><path d="M30 619.5h4"/><path d="M789 619.5h-4"/><path d="M405.0 619.5h9"/><path d="M30 632.5h4"/><path d="M789 632.5h-4"/><path d="M405.0 632.5h9"/><path d="M30 646.5h4"/><path d="M789 646.5h-4"/><path d="M405.0 646.5h9"/><path d="M30 659.5h4"/><path d="M789 659.5h-4"/><path d="M405.0 659.5h9"/></g>
<g stroke="#b4b4b4" stroke-width="1" shape-rendering="crispEdges"><path d="M409.5 132V673"/><path d="M30 402.5H789"/></g>
<rect x="29" y="131" width="761" height="543" fill="none" stroke="#c6c6c6" stroke-width="2" shape-rendering="crispEdges"/>
<polyline fill="none" stroke="#ecec24" stroke-width="1.400" points="30.0,219.0 32.6,219.0 32.6,221.0 34.6,221.0 34.6,220.0 34.6,223.0 36.5,223.0 36.5,224.0 39.3,224.0 39.3,227.0 41.2,227.0 41.2,229.0 44.5,229.0 44.5,231.0 47.8,231.0 47.8,234.0 50.9,234.0 50.9,237.0 54.0,237.0 54.0,236.0 57.4,236.0 57.4,234.0 59.7,234.0 59.7,233.0 62.8,233.0 62.8,230.0 65.9,230.0 65.9,226.0 69.9,226.0 69.9,225.0 72.2,225.0 72.2,222.0 74.7,222.0 74.7,220.0 77.6,220.0 77.6,216.0 80.6,216.0 80.6,214.0 84.6,214.0 84.6,212.0 86.6,212.0 86.6,209.0 90.4,209.0 90.4,207.0 93.4,207.0 93.4,204.0 95.4,204.0 95.4,203.0 97.3,203.0 97.3,200.0 100.5,200.0 100.5,198.0 104.1,198.0 104.1,194.0 108.1,194.0 108.1,190.0 111.1,190.0 111.1,188.0 114.7,188.0 114.7,185.0 117.7,185.0 117.7,182.0 120.1,182.0 120.1,181.0 123.2,181.0 123.2,178.0 126.7,178.0 126.7,175.0 128.7,175.0 128.7,175.0 130.5,175.0 130.5,174.0 133.0,174.0 133.0,177.0 136.3,177.0 136.3,181.0 140.1,181.0 140.1,184.0 143.7,184.0 143.7,187.0 147.8,187.0 147.8,190.0 150.5,190.0 150.5,192.0 153.3,192.0 153.3,194.0 156.1,194.0 156.1,197.0 158.2,197.0 158.2,200.0 162.3,200.0 162.3,202.0 164.6,202.0 164.6,205.0 168.7,205.0 168.7,207.0 170.7,207.0 170.7,209.0 173.7,209.0 173.7,213.0 177.3,213.0 177.3,216.0 180.8,216.0 180.8,218.0 184.8,218.0 184.8,223.0 188.8,223.0 188.8,225.0 192.2,225.0 192.2,229.0 195.2,229.0 195.2,230.0 197.6,230.0 197.6,233.0 200.9,233.0 200.9,235.0 204.5,235.0 204.5,239.0 207.3,239.0 207.3,237.0 210.2,237.0 210.2,234.0 213.9,234.0 213.9,230.0 217.2,230.0 217.2,228.0 220.7,228.0 220.7,225.0 222.7,225.0 222.7,224.0 225.3,224.0 225.3,220.0 228.6,220.0 228.6,219.0 231.2,219.0 231.2,217.0 233.3,217.0 233.3,216.0 235.6,216.0 235.6,212.0 238.9,212.0 238.9,210.0 242.4,210.0 242.4,207.0 244.5,207.0 244.5,206.0 246.3,206.0 246.3,204.0 249.7,204.0 249.7,202.0 252.6,202.0 252.6,198.0 255.7,198.0 255.7,195.0 259.3,195.0 259.3,195.0 261.4,195.0 261.4,190.0 265.3,190.0 265.3,189.0 268.3,189.0 268.3,187.0 271.4,187.0 271.4,184.0 275.0,184.0 275.0,180.0 278.8,180.0 278.8,176.0 282.7,176.0 282.7,179.0 285.7,179.0 285.7,181.0 289.0,181.0 289.0,183.0 291.1,183.0 291.1,185.0 293.0,185.0 293.0,187.0 296.0,187.0 296.0,188.0 297.9,188.0 297.9,188.0 297.9,190.0 300.0,190.0 300.0,192.0 302.8,192.0 302.8,195.0 305.9,195.0 305.9,197.0 308.9,197.0 308.9,200.0 312.4,200.0 312.4,202.0 314.8,202.0 314.8,204.0 318.7,204.0 318.7,207.0 321.5,207.0 321.5,210.0 323.5,210.0 323.5,211.0 327.5,211.0 327.5,214.0 330.8,214.0 330.8,217.0 335.0,217.0 335.0,221.0 337.7,221.0 337.7,223.0 341.5,223.0 341.5,226.0 344.5,226.0 344.5,226.0 344.5,229.0 347.1,229.0 347.1,230.0 350.0,230.0 350.0,233.0 353.3,233.0 353.3,237.0 357.4,237.0 357.4,236.0 357.4,238.0 359.5,238.0 359.5,236.0 361.9,236.0 361.9,234.0 365.9,234.0 365.9,232.0 368.1,232.0 368.1,228.0 371.6,228.0 371.6,226.0 375.0,226.0 375.0,223.0 379.1,223.0 379.1,221.0 381.1,221.0 381.1,218.0 384.9,218.0 384.9,216.0 388.1,216.0 388.1,213.0 390.2,213.0 390.2,211.0 392.2,211.0 392.2,209.0 394.5,209.0 394.5,207.0 398.1,207.0 398.1,201.0 398.1,204.0 400.4,204.0 400.4,202.0 402.3,202.0 402.3,200.0 406.4,200.0 406.4,198.0 409.3,198.0 409.3,195.0 412.7,195.0 412.7,191.0 416.8,191.0 416.8,189.0 419.1,189.0 419.1,186.0 422.7,186.0 422.7,181.0 422.7,184.0 426.8,184.0 426.8,180.0 429.7,180.0 429.7,178.0 432.4,178.0 432.4,176.0 435.6,176.0 435.6,175.0 435.6,178.0 437.9,178.0 437.9,182.0 442.0,182.0 442.0,184.0 444.4,184.0 444.4,185.0 447.0,185.0 447.0,188.0 450.0,188.0 450.0,189.0 453.0,189.0 453.0,192.0 455.0,192.0 455.0,194.0 456.8,194.0 456.8,196.0 460.0,196.0 460.0,199.0 463.4,199.0 463.4,201.0 466.2,201.0 466.2,204.0 468.3,204.0 468.3,206.0 470.2,206.0 470.2,208.0 473.5,208.0 473.5,209.0 475.7,209.0 475.7,212.0 479.5,212.0 479.5,216.0 482.7,216.0 482.7,215.0 482.7,217.0 486.1,217.0 486.1,221.0 489.5,221.0 489.5,220.0 489.5,222.0 492.3,222.0 492.3,224.0 495.3,224.0 495.3,228.0 498.9,228.0 498.9,230.0 502.3,230.0 502.3,232.0 504.7,232.0 504.7,235.0 508.3,235.0 508.3,238.0 512.4,238.0 512.4,236.0 515.3,236.0 515.3,233.0 518.6,233.0 518.6,230.0 520.8,230.0 520.8,226.0 520.8,228.0 523.3,228.0 523.3,227.0 526.3,227.0 526.3,223.0 528.6,223.0 528.6,221.0 531.1,221.0 531.1,219.0 535.3,219.0 535.3,216.0 537.3,216.0 537.3,214.0 539.3,214.0 539.3,211.0 543.4,211.0 543.4,207.0 547.5,207.0 547.5,204.0 551.1,204.0 551.1,202.0 554.3,202.0 554.3,199.0 556.4,199.0 556.4,197.0 560.3,197.0 560.3,194.0 564.4,194.0 564.4,190.0 567.9,190.0 567.9,187.0 570.0,187.0 570.0,185.0 572.6,185.0 572.6,182.0 574.9,182.0 574.9,181.0 577.3,181.0 577.3,178.0 581.2,178.0 581.2,176.0 584.8,176.0 584.8,173.0 586.7,173.0 586.7,175.0 588.9,175.0 588.9,177.0 591.4,177.0 591.4,178.0 594.3,178.0 594.3,182.0 597.0,182.0 597.0,183.0 599.3,183.0 599.3,186.0 602.1,186.0 602.1,189.0 606.0,189.0 606.0,191.0 609.1,191.0 609.1,194.0 611.6,194.0 611.6,197.0 614.9,197.0 614.9,200.0 617.9,200.0 617.9,202.0 621.2,202.0 621.2,206.0 625.0,206.0 625.0,209.0 627.6,209.0 627.6,211.0 630.7,211.0 630.7,214.0 633.8,214.0 633.8,213.0 633.8,216.0 637.6,216.0 637.6,220.0 640.3,220.0 640.3,223.0 642.8,223.0 642.8,224.0 645.9,224.0 645.9,228.0 649.0,228.0 649.0,231.0 651.0,231.0 651.0,232.0 654.4,232.0 654.4,236.0 658.1,236.0 658.1,239.0 661.0,239.0 661.0,240.0 665.1,240.0 665.1,237.0 669.1,237.0 669.1,233.0 672.0,233.0 672.0,230.0 674.4,230.0 674.4,229.0 676.4,229.0 676.4,227.0 680.3,227.0 680.3,222.0 683.9,222.0 683.9,219.0 687.1,219.0 687.1,217.0 691.2,217.0 691.2,214.0 694.1,214.0 694.1,212.0 696.6,212.0 696.6,207.0 696.6,210.0 699.0,210.0 699.0,206.0 703.2,206.0 703.2,202.0 707.0,202.0 707.0,199.0 710.1,199.0 710.1,196.0 713.5,196.0 713.5,194.0 717.4,194.0 717.4,190.0 719.7,190.0 719.7,189.0 722.7,189.0 722.7,183.0 722.7,186.0 725.4,186.0 725.4,183.0 729.0,183.0 729.0,179.0 733.1,179.0 733.1,176.0 735.5,176.0 735.5,176.0 738.0,176.0 738.0,174.0 740.2,174.0 740.2,178.0 743.6,178.0 743.6,179.0 746.4,179.0 746.4,181.0 748.5,181.0 748.5,184.0 751.2,184.0 751.2,187.0 754.8,187.0 754.8,188.0 757.4,188.0 757.4,191.0 761.0,191.0 761.0,194.0 763.7,194.0 763.7,195.0 765.9,195.0 765.9,199.0 768.5,199.0 768.5,201.0 772.7,201.0 772.7,205.0 776.4,205.0 776.4,207.0 778.3,207.0 778.3,209.0 782.3,209.0 782.3,212.0 786.3,212.0 786.3,217.0 789.0,217.0"/>
<polyline fill="none" stroke="#20e4ec" stroke-width="1.300" points="30.0,341.5 55.5,341.5 55.5,272.0 86.0,272.0 86.0,341.5 360.0,341.5 360.0,272.0 390.5,272.0 390.5,341.5 664.0,341.5 664.0,272.0 694.5,272.0 694.5,341.5 789.0,341.5"/>
<rect x="30" y="339.8" width="1" height="1" fill="#20e0e8"/><rect x="32" y="339.8" width="2" height="1" fill="#20e0e8"/><rect x="35" y="339.8" width="3" height="1" fill="#20e0e8"/><rect x="45" y="339.8" width="1" height="1" fill="#20e0e8"/><rect x="49" y="339.8" width="3" height="1" fill="#20e0e8"/><rect x="54" y="339.8" width="2" height="1" fill="#20e0e8"/>
<rect x="101" y="339.8" width="2" height="1" fill="#20e0e8"/><rect x="105" y="339.8" width="1" height="1" fill="#20e0e8"/><rect x="112" y="339.8" width="3" height="1" fill="#20e0e8"/><rect x="117" y="339.8" width="2" height="1" fill="#20e0e8"/><rect x="122" y="339.8" width="1" height="1" fill="#20e0e8"/><rect x="125" y="339.8" width="1" height="1" fill="#20e0e8"/><rect x="127" y="339.8" width="3" height="1" fill="#20e0e8"/><rect x="133" y="339.8" width="3" height="1" fill="#20e0e8"/><rect x="141" y="339.8" width="3" height="1" fill="#20e0e8"/><rect x="145" y="339.8" width="2" height="1" fill="#20e0e8"/><rect x="150" y="339.8" width="2" height="1" fill="#20e0e8"/><rect x="153" y="339.8" width="2" height="1" fill="#20e0e8"/><rect x="165" y="339.8" width="2" height="1" fill="#20e0e8"/><rect x="169" y="339.8" width="2" height="1" fill="#20e0e8"/><rect x="173" y="339.8" width="1" height="1" fill="#20e0e8"/><rect x="175" y="339.8" width="1" height="1" fill="#20e0e8"/><rect x="178" y="339.8" width="3" height="1" fill="#20e0e8"/><rect x="182" y="339.8" width="2" height="1" fill="#20e0e8"/><rect x="185" y="339.8" width="3" height="1" fill="#20e0e8"/><rect x="193" y="339.8" width="1" height="1" fill="#20e0e8"/><rect x="198" y="339.8" width="2" height="1" fill="#20e0e8"/><rect x="213" y="339.8" width="3" height="1" fill="#20e0e8"/><rect x="219" y="339.8" width="1" height="1" fill="#20e0e8"/><rect x="227" y="339.8" width="1" height="1" fill="#20e0e8"/><rect x="229" y="339.8" width="1" height="1" fill="#20e0e8"/><rect x="242" y="339.8" width="3" height="1" fill="#20e0e8"/><rect x="250" y="339.8" width="2" height="1" fill="#20e0e8"/><rect x="256" y="339.8" width="3" height="1" fill="#20e0e8"/><rect x="262" y="339.8" width="1" height="1" fill="#20e0e8"/><rect x="270" y="339.8" width="2" height="1" fill="#20e0e8"/><rect x="277" y="339.8" width="2" height="1" fill="#20e0e8"/><rect x="281" y="339.8" width="3" height="1" fill="#20e0e8"/><rect x="287" y="339.8" width="2" height="1" fill="#20e0e8"/><rect x="302" y="339.8" width="1" height="1" fill="#20e0e8"/><rect x="304" y="339.8" width="3" height="1" fill="#20e0e8"/><rect x="312" y="339.8" width="3" height="1" fill="#20e0e8"/><rect x="316" y="339.8" width="2" height="1" fill="#20e0e8"/><rect x="323" y="339.8" width="2" height="1" fill="#20e0e8"/><rect x="326" y="339.8" width="2" height="1" fill="#20e0e8"/><rect x="329" y="339.8" width="2" height="1" fill="#20e0e8"/><rect x="334" y="339.8" width="3" height="1" fill="#20e0e8"/><rect x="348" y="339.8" width="3" height="1" fill="#20e0e8"/><rect x="352" y="339.8" width="2" height="1" fill="#20e0e8"/><rect x="355" y="339.8" width="1" height="1" fill="#20e0e8"/><rect x="359" y="339.8" width="1" height="1" fill="#20e0e8"/>
<rect x="392" y="339.8" width="1" height="1" fill="#20e0e8"/><rect x="396" y="339.8" width="1" height="1" fill="#20e0e8"/><rect x="400" y="339.8" width="3" height="1" fill="#20e0e8"/><rect x="404" y="339.8" width="1" height="1" fill="#20e0e8"/><rect x="412" y="339.8" width="3" height="1" fill="#20e0e8"/><rect x="418" y="339.8" width="1" height="1" fill="#20e0e8"/><rect x="422" y="339.8" width="2" height="1" fill="#20e0e8"/><rect x="426" y="339.8" width="1" height="1" fill="#20e0e8"/><rect x="430" y="339.8" width="2" height="1" fill="#20e0e8"/><rect x="442" y="339.8" width="1" height="1" fill="#20e0e8"/><rect x="446" y="339.8" width="2" height="1" fill="#20e0e8"/><rect x="450" y="339.8" width="3" height="1" fill="#20e0e8"/><rect x="456" y="339.8" width="3" height="1" fill="#20e0e8"/><rect x="462" y="339.8" width="3" height="1" fill="#20e0e8"/><rect x="478" y="339.8" width="1" height="1" fill="#20e0e8"/><rect x="492" y="339.8" width="2" height="1" fill="#20e0e8"/><rect x="502" y="339.8" width="1" height="1" fill="#20e0e8"/><rect x="508" y="339.8" width="3" height="1" fill="#20e0e8"/><rect x="514" y="339.8" width="1" height="1" fill="#20e0e8"/><rect x="520" y="339.8" width="3" height="1" fill="#20e0e8"/><rect x="534" y="339.8" width="3" height="1" fill="#20e0e8"/><rect x="540" y="339.8" width="1" height="1" fill="#20e0e8"/><rect x="550" y="339.8" width="2" height="1" fill="#20e0e8"/><rect x="554" y="339.8" width="3" height="1" fill="#20e0e8"/><rect x="560" y="339.8" width="1" height="1" fill="#20e0e8"/><rect x="582" y="339.8" width="1" height="1" fill="#20e0e8"/><rect x="586" y="339.8" width="2" height="1" fill="#20e0e8"/><rect x="590" y="339.8" width="1" height="1" fill="#20e0e8"/><rect x="596" y="339.8" width="1" height="1" fill="#20e0e8"/><rect x="600" y="339.8" width="2" height="1" fill="#20e0e8"/><rect x="604" y="339.8" width="3" height="1" fill="#20e0e8"/><rect x="616" y="339.8" width="1" height="1" fill="#20e0e8"/><rect x="618" y="339.8" width="3" height="1" fill="#20e0e8"/><rect x="626" y="339.8" width="2" height="1" fill="#20e0e8"/><rect x="630" y="339.8" width="1" height="1" fill="#20e0e8"/><rect x="644" y="339.8" width="3" height="1" fill="#20e0e8"/><rect x="648" y="339.8" width="1" height="1" fill="#20e0e8"/><rect x="652" y="339.8" width="1" height="1" fill="#20e0e8"/><rect x="654" y="339.8" width="1" height="1" fill="#20e0e8"/><rect x="660" y="339.8" width="1" height="1" fill="#20e0e8"/>
<rect x="702" y="339.8" width="1" height="1" fill="#20e0e8"/><rect x="716" y="339.8" width="2" height="1" fill="#20e0e8"/><rect x="722" y="339.8" width="2" height="1" fill="#20e0e8"/><rect x="724" y="339.8" width="2" height="1" fill="#20e0e8"/><rect x="728" y="339.8" width="1" height="1" fill="#20e0e8"/><rect x="736" y="339.8" width="3" height="1" fill="#20e0e8"/><rect x="760" y="339.8" width="1" height="1" fill="#20e0e8"/><rect x="762" y="339.8" width="3" height="1" fill="#20e0e8"/><rect x="770" y="339.8" width="2" height="1" fill="#20e0e8"/><rect x="784" y="339.8" width="2" height="1" fill="#20e0e8"/><rect x="788" y="339.8" width="1" height="1" fill="#20e0e8"/>
<rect x="68" y="272.8" width="4" height="1" fill="#20e0e8"/><rect x="78" y="272.8" width="1" height="1" fill="#20e0e8"/>
<rect x="361" y="272.8" width="2" height="1" fill="#20e0e8"/><rect x="364" y="272.8" width="1" height="1" fill="#20e0e8"/><rect x="368" y="272.8" width="1" height="1" fill="#20e0e8"/><rect x="372" y="272.8" width="1" height="1" fill="#20e0e8"/><rect x="376" y="272.8" width="3" height="1" fill="#20e0e8"/><rect x="386" y="272.8" width="4" height="1" fill="#20e0e8"/>
<rect x="665" y="272.8" width="2" height="1" fill="#20e0e8"/><rect x="672" y="272.8" width="3" height="1" fill="#20e0e8"/><rect x="676" y="272.8" width="1" height="1" fill="#20e0e8"/><rect x="680" y="272.8" width="2" height="1" fill="#20e0e8"/><rect x="684" y="272.8" width="4" height="1" fill="#20e0e8"/>
<polyline fill="none" stroke="#e424dc" stroke-width="1.300" points="30.0,500.0 38.5,500.0 38.5,438.0 114.5,438.0 114.5,500.0 190.5,500.0 190.5,438.0 266.5,438.0 266.5,500.0 342.5,500.0 342.5,438.0 418.5,438.0 418.5,500.0 494.5,500.0 494.5,438.0 570.5,438.0 570.5,500.0 646.5,500.0 646.5,438.0 722.5,438.0 722.5,500.0 789.0,500.0"/>

<rect x="68" y="438.9" width="1" height="1" fill="#e020d8"/><rect x="72" y="438.9" width="2" height="1" fill="#e020d8"/><rect x="76" y="438.9" width="2" height="1" fill="#e020d8"/><rect x="80" y="438.9" width="1" height="1" fill="#e020d8"/><rect x="82" y="438.9" width="4" height="1" fill="#e020d8"/><rect x="86" y="438.9" width="4" height="1" fill="#e020d8"/><rect x="94" y="438.9" width="3" height="1" fill="#e020d8"/><rect x="98" y="438.9" width="3" height="1" fill="#e020d8"/><rect x="104" y="438.9" width="2" height="1" fill="#e020d8"/><rect x="106" y="438.9" width="6" height="1" fill="#e020d8"/>
<rect x="41.0" y="435" width="1" height="3" fill="#e020d8"/>
<rect x="44.0" y="435" width="1" height="3" fill="#e020d8"/>
<rect x="47.0" y="435" width="1" height="3" fill="#e020d8"/>
<rect x="126" y="498.2" width="3" height="1" fill="#e020d8"/><rect x="148" y="498.2" width="2" height="1" fill="#e020d8"/>
<rect x="152" y="498.2" width="5" height="1" fill="#e020d8"/><rect x="160" y="498.2" width="5" height="1" fill="#e020d8"/><rect x="166" y="498.2" width="5" height="1" fill="#e020d8"/><rect x="172" y="498.2" width="4" height="1" fill="#e020d8"/><rect x="180" y="498.2" width="3" height="1" fill="#e020d8"/><rect x="184" y="498.2" width="6" height="1" fill="#e020d8"/>
<rect x="115.5" y="500" width="1.2" height="4.0" fill="#e020d8"/>
<rect x="122.0" y="500" width="1.2" height="3.5" fill="#e020d8"/>
<rect x="128.0" y="500" width="1.2" height="3.5" fill="#e020d8"/>
<rect x="198" y="438.9" width="1" height="1" fill="#e020d8"/><rect x="206" y="438.9" width="3" height="1" fill="#e020d8"/><rect x="218" y="438.9" width="3" height="1" fill="#e020d8"/>
<rect x="220" y="438.9" width="3" height="1" fill="#e020d8"/><rect x="226" y="438.9" width="2" height="1" fill="#e020d8"/><rect x="230" y="438.9" width="1" height="1" fill="#e020d8"/><rect x="234" y="438.9" width="1" height="1" fill="#e020d8"/><rect x="236" y="438.9" width="2" height="1" fill="#e020d8"/><rect x="242" y="438.9" width="3" height="1" fill="#e020d8"/><rect x="246" y="438.9" width="1" height="1" fill="#e020d8"/><rect x="248" y="438.9" width="3" height="1" fill="#e020d8"/><rect x="252" y="438.9" width="4" height="1" fill="#e020d8"/><rect x="258" y="438.9" width="4" height="1" fill="#e020d8"/>
<rect x="196.0" y="435" width="1" height="3" fill="#e020d8"/>
<rect x="199.0" y="435" width="1" height="3" fill="#e020d8"/>
<rect x="274" y="498.2" width="1" height="1" fill="#e020d8"/>
<rect x="300" y="498.2" width="6" height="1" fill="#e020d8"/><rect x="308" y="498.2" width="6" height="1" fill="#e020d8"/><rect x="314" y="498.2" width="4" height="1" fill="#e020d8"/><rect x="320" y="498.2" width="6" height="1" fill="#e020d8"/><rect x="328" y="498.2" width="2" height="1" fill="#e020d8"/><rect x="334" y="498.2" width="6" height="1" fill="#e020d8"/>
<rect x="267.5" y="500" width="1.2" height="4.0" fill="#e020d8"/>
<rect x="274.0" y="500" width="1.2" height="3.5" fill="#e020d8"/>
<rect x="280.0" y="500" width="1.2" height="3.5" fill="#e020d8"/>
<rect x="364" y="438.9" width="3" height="1" fill="#e020d8"/><rect x="370" y="438.9" width="1" height="1" fill="#e020d8"/>
<rect x="372" y="438.9" width="2" height="1" fill="#e020d8"/><rect x="376" y="438.9" width="5" height="1" fill="#e020d8"/><rect x="384" y="438.9" width="4" height="1" fill="#e020d8"/><rect x="390" y="438.9" width="4" height="1" fill="#e020d8"/><rect x="398" y="438.9" width="3" height="1" fill="#e020d8"/><rect x="410" y="438.9" width="6" height="1" fill="#e020d8"/>
<rect x="348.0" y="435" width="1" height="3" fill="#e020d8"/>
<rect x="351.0" y="435" width="1" height="3" fill="#e020d8"/>
<rect x="430" y="498.2" width="2" height="1" fill="#e020d8"/><rect x="434" y="498.2" width="1" height="1" fill="#e020d8"/><rect x="446" y="498.2" width="1" height="1" fill="#e020d8"/>
<rect x="452" y="498.2" width="4" height="1" fill="#e020d8"/><rect x="458" y="498.2" width="1" height="1" fill="#e020d8"/><rect x="462" y="498.2" width="2" height="1" fill="#e020d8"/><rect x="466" y="498.2" width="6" height="1" fill="#e020d8"/><rect x="474" y="498.2" width="3" height="1" fill="#e020d8"/><rect x="486" y="498.2" width="6" height="1" fill="#e020d8"/>
<rect x="419.5" y="500" width="1.2" height="4.0" fill="#e020d8"/>
<rect x="426.0" y="500" width="1.2" height="3.5" fill="#e020d8"/>
<rect x="432.0" y="500" width="1.2" height="3.5" fill="#e020d8"/>

<rect x="524" y="438.9" width="3" height="1" fill="#e020d8"/><rect x="530" y="438.9" width="4" height="1" fill="#e020d8"/><rect x="534" y="438.9" width="6" height="1" fill="#e020d8"/><rect x="542" y="438.9" width="3" height="1" fill="#e020d8"/><rect x="546" y="438.9" width="1" height="1" fill="#e020d8"/><rect x="548" y="438.9" width="2" height="1" fill="#e020d8"/><rect x="552" y="438.9" width="6" height="1" fill="#e020d8"/><rect x="562" y="438.9" width="1" height="1" fill="#e020d8"/><rect x="564" y="438.9" width="6" height="1" fill="#e020d8"/>
<rect x="497.0" y="435" width="1" height="3" fill="#e020d8"/>
<rect x="500.0" y="435" width="1" height="3" fill="#e020d8"/>
<rect x="503.0" y="435" width="1" height="3" fill="#e020d8"/>
<rect x="578" y="498.2" width="1" height="1" fill="#e020d8"/>
<rect x="604" y="498.2" width="1" height="1" fill="#e020d8"/><rect x="608" y="498.2" width="6" height="1" fill="#e020d8"/><rect x="616" y="498.2" width="1" height="1" fill="#e020d8"/><rect x="618" y="498.2" width="2" height="1" fill="#e020d8"/><rect x="624" y="498.2" width="1" height="1" fill="#e020d8"/><rect x="626" y="498.2" width="6" height="1" fill="#e020d8"/><rect x="634" y="498.2" width="2" height="1" fill="#e020d8"/><rect x="638" y="498.2" width="1" height="1" fill="#e020d8"/><rect x="642" y="498.2" width="4" height="1" fill="#e020d8"/>
<rect x="571.5" y="500" width="1.2" height="4.0" fill="#e020d8"/>
<rect x="578.0" y="500" width="1.2" height="3.5" fill="#e020d8"/>
<rect x="584.0" y="500" width="1.2" height="3.5" fill="#e020d8"/>
<rect x="654" y="438.9" width="3" height="1" fill="#e020d8"/><rect x="664" y="438.9" width="1" height="1" fill="#e020d8"/><rect x="672" y="438.9" width="3" height="1" fill="#e020d8"/>
<rect x="676" y="438.9" width="3" height="1" fill="#e020d8"/><rect x="680" y="438.9" width="5" height="1" fill="#e020d8"/><rect x="686" y="438.9" width="1" height="1" fill="#e020d8"/><rect x="690" y="438.9" width="6" height="1" fill="#e020d8"/><rect x="696" y="438.9" width="6" height="1" fill="#e020d8"/><rect x="704" y="438.9" width="5" height="1" fill="#e020d8"/><rect x="710" y="438.9" width="3" height="1" fill="#e020d8"/><rect x="716" y="438.9" width="3" height="1" fill="#e020d8"/><rect x="720" y="438.9" width="2" height="1" fill="#e020d8"/>
<rect x="655.0" y="435" width="1" height="3" fill="#e020d8"/>
<rect x="736" y="498.2" width="2" height="1" fill="#e020d8"/><rect x="742" y="498.2" width="2" height="1" fill="#e020d8"/>
<rect x="756" y="498.2" width="3" height="1" fill="#e020d8"/><rect x="760" y="498.2" width="2" height="1" fill="#e020d8"/><rect x="764" y="498.2" width="5" height="1" fill="#e020d8"/><rect x="778" y="498.2" width="4" height="1" fill="#e020d8"/><rect x="786" y="498.2" width="3" height="1" fill="#e020d8"/>
<rect x="723.5" y="500" width="1.2" height="4.0" fill="#e020d8"/>
<rect x="730.0" y="500" width="1.2" height="3.5" fill="#e020d8"/>
<rect x="736.0" y="500" width="1.2" height="3.5" fill="#e020d8"/>
<rect x="30" y="498.2" width="1" height="1" fill="#e020d8"/><rect x="34" y="498.2" width="4" height="1" fill="#e020d8"/>
<polyline fill="none" stroke="#20d428" stroke-width="1.250" points="30.0,576.0 32.6,576.0 32.6,575.0 36.2,575.0 36.2,574.0 39.2,574.0 39.2,573.0 42.5,573.0 42.5,573.0 45.6,573.0 45.6,574.0 49.0,574.0 49.0,573.0 52.3,573.0 52.3,574.0 56.0,574.0 56.0,574.0 59.1,574.0 59.1,577.0 62.5,577.0 62.5,579.0 65.6,579.0 65.6,582.0 69.1,582.0 69.1,584.0 71.5,584.0 71.5,588.0 74.1,588.0 74.1,590.0 77.9,590.0 77.9,594.0 81.4,594.0 81.4,598.0 84.1,598.0 84.1,602.0 87.7,602.0 87.7,605.0 90.2,605.0 90.2,608.0 93.3,608.0 93.3,612.0 97.3,612.0 97.3,615.0 99.7,615.0 99.7,617.0 102.2,617.0 102.2,620.0 104.9,620.0 104.9,621.0 107.4,621.0 107.4,623.0 110.5,623.0 110.5,624.0 114.2,624.0 114.2,625.0 117.6,625.0 117.6,625.0 121.2,625.0 121.2,625.0 124.5,625.0 124.5,625.0 128.5,625.0 128.5,625.0 131.4,625.0 131.4,624.0 135.2,624.0 135.2,622.0 138.2,622.0 138.2,619.0 141.7,619.0 141.7,613.0 141.7,616.0 145.4,616.0 145.4,613.0 148.3,613.0 148.3,610.0 151.9,610.0 151.9,607.0 154.5,607.0 154.5,604.0 157.1,604.0 157.1,601.0 160.4,601.0 160.4,597.0 163.7,597.0 163.7,593.0 166.7,593.0 166.7,589.0 170.6,589.0 170.6,586.0 173.7,586.0 173.7,582.0 177.0,582.0 177.0,580.0 180.3,580.0 180.3,578.0 182.8,578.0 182.8,576.0 185.6,576.0 185.6,574.0 188.8,574.0 188.8,574.0 191.4,574.0 191.4,573.0 194.7,573.0 194.7,573.0 198.5,573.0 198.5,574.0 201.6,574.0 201.6,573.0 204.8,573.0 204.8,573.0 207.2,573.0 207.2,574.0 209.8,574.0 209.8,576.0 213.1,576.0 213.1,578.0 217.0,578.0 217.0,581.0 220.1,581.0 220.1,584.0 222.7,584.0 222.7,587.0 226.7,587.0 226.7,590.0 229.1,590.0 229.1,594.0 232.3,594.0 232.3,598.0 236.1,598.0 236.1,601.0 239.6,601.0 239.6,605.0 242.4,605.0 242.4,608.0 245.6,608.0 245.6,611.0 248.6,611.0 248.6,615.0 251.3,615.0 251.3,617.0 253.8,617.0 253.8,619.0 257.6,619.0 257.6,622.0 261.2,622.0 261.2,622.0 261.2,624.0 263.8,624.0 263.8,625.0 267.3,625.0 267.3,625.0 270.9,625.0 270.9,625.0 273.7,625.0 273.7,625.0 276.4,625.0 276.4,624.0 279.9,624.0 279.9,624.0 282.6,624.0 282.6,625.0 285.3,625.0 285.3,622.0 289.1,622.0 289.1,621.0 291.7,621.0 291.7,618.0 295.1,618.0 295.1,615.0 298.8,615.0 298.8,612.0 301.4,612.0 301.4,609.0 305.0,609.0 305.0,605.0 308.8,605.0 308.8,601.0 311.4,601.0 311.4,598.0 314.4,598.0 314.4,595.0 317.3,595.0 317.3,590.0 321.2,590.0 321.2,587.0 324.7,587.0 324.7,584.0 327.6,584.0 327.6,582.0 330.6,582.0 330.6,578.0 334.4,578.0 334.4,575.0 338.3,575.0 338.3,574.0 341.1,574.0 341.1,573.0 344.8,573.0 344.8,574.0 347.2,574.0 347.2,573.0 349.9,573.0 349.9,574.0 352.7,574.0 352.7,574.0 355.4,574.0 355.4,573.0 358.1,573.0 358.1,574.0 361.5,574.0 361.5,576.0 364.2,576.0 364.2,578.0 367.9,578.0 367.9,580.0 370.4,580.0 370.4,582.0 373.9,582.0 373.9,586.0 376.9,586.0 376.9,588.0 380.1,588.0 380.1,593.0 383.2,593.0 383.2,596.0 385.9,596.0 385.9,598.0 388.6,598.0 388.6,601.0 391.0,601.0 391.0,604.0 394.2,604.0 394.2,609.0 397.9,609.0 397.9,612.0 401.5,612.0 401.5,615.0 404.0,615.0 404.0,618.0 407.2,618.0 407.2,620.0 410.4,620.0 410.4,622.0 413.2,622.0 413.2,624.0 416.0,624.0 416.0,625.0 418.5,625.0 418.5,625.0 421.0,625.0 421.0,625.0 424.2,625.0 424.2,625.0 428.0,625.0 428.0,625.0 430.6,625.0 430.6,625.0 433.4,625.0 433.4,625.0 436.0,625.0 436.0,624.0 438.7,624.0 438.7,622.0 441.3,622.0 441.3,620.0 444.4,620.0 444.4,618.0 447.6,618.0 447.6,614.0 451.3,614.0 451.3,611.0 454.2,611.0 454.2,608.0 457.9,608.0 457.9,603.0 461.6,603.0 461.6,600.0 465.6,600.0 465.6,596.0 468.6,596.0 468.6,592.0 471.9,592.0 471.9,588.0 475.1,588.0 475.1,585.0 479.0,585.0 479.0,582.0 482.5,582.0 482.5,578.0 486.3,578.0 486.3,576.0 489.1,576.0 489.1,575.0 492.4,575.0 492.4,574.0 495.2,574.0 495.2,573.0 499.1,573.0 499.1,573.0 502.5,573.0 502.5,574.0 506.5,574.0 506.5,574.0 509.6,574.0 509.6,573.0 512.2,573.0 512.2,575.0 515.3,575.0 515.3,577.0 517.8,577.0 517.8,579.0 521.2,579.0 521.2,581.0 523.9,581.0 523.9,584.0 527.2,584.0 527.2,587.0 530.1,587.0 530.1,590.0 533.3,590.0 533.3,593.0 535.7,593.0 535.7,596.0 538.5,596.0 538.5,600.0 541.3,600.0 541.3,603.0 545.0,603.0 545.0,607.0 548.8,607.0 548.8,611.0 551.8,611.0 551.8,613.0 554.4,613.0 554.4,616.0 557.9,616.0 557.9,619.0 560.9,619.0 560.9,622.0 564.7,622.0 564.7,624.0 568.3,624.0 568.3,625.0 571.4,625.0 571.4,625.0 575.3,625.0 575.3,625.0 577.7,625.0 577.7,625.0 580.9,625.0 580.9,625.0 583.9,625.0 583.9,625.0 587.3,625.0 587.3,624.0 590.5,624.0 590.5,622.0 593.5,622.0 593.5,620.0 596.4,620.0 596.4,618.0 599.6,618.0 599.6,615.0 602.5,615.0 602.5,612.0 605.8,612.0 605.8,609.0 608.7,609.0 608.7,605.0 612.7,605.0 612.7,600.0 616.5,600.0 616.5,597.0 619.8,597.0 619.8,593.0 623.5,593.0 623.5,589.0 626.7,589.0 626.7,586.0 629.7,586.0 629.7,583.0 632.7,583.0 632.7,580.0 635.9,580.0 635.9,578.0 639.0,578.0 639.0,576.0 642.8,576.0 642.8,574.0 645.9,574.0 645.9,574.0 648.8,574.0 648.8,573.0 651.5,573.0 651.5,574.0 655.2,574.0 655.2,574.0 659.0,574.0 659.0,574.0 663.0,574.0 663.0,574.0 665.7,574.0 665.7,576.0 668.9,576.0 668.9,578.0 672.3,578.0 672.3,581.0 676.3,581.0 676.3,584.0 679.3,584.0 679.3,587.0 682.8,587.0 682.8,591.0 686.6,591.0 686.6,595.0 689.3,595.0 689.3,598.0 692.1,598.0 692.1,602.0 696.1,602.0 696.1,605.0 698.7,605.0 698.7,608.0 701.3,608.0 701.3,612.0 704.5,612.0 704.5,614.0 708.2,614.0 708.2,618.0 711.9,618.0 711.9,620.0 714.8,620.0 714.8,623.0 717.4,623.0 717.4,624.0 720.3,624.0 720.3,625.0 722.8,625.0 722.8,625.0 726.8,625.0 726.8,624.0 729.6,624.0 729.6,625.0 733.3,625.0 733.3,625.0 737.0,625.0 737.0,625.0 741.0,625.0 741.0,623.0 743.8,623.0 743.8,621.0 746.5,621.0 746.5,619.0 749.7,619.0 749.7,617.0 752.4,617.0 752.4,614.0 756.3,614.0 756.3,610.0 758.9,610.0 758.9,607.0 761.9,607.0 761.9,604.0 765.7,604.0 765.7,600.0 768.4,600.0 768.4,597.0 770.8,597.0 770.8,594.0 773.5,594.0 773.5,592.0 776.3,592.0 776.3,588.0 779.4,588.0 779.4,585.0 782.1,585.0 782.1,583.0 785.1,583.0 785.1,580.0 789.0,580.0 789.0,578.0 789.0,578.0"/>
<g font-family="Liberation Sans, sans-serif">
<polygon points="11,191.0 23,191.0 27.8,196.6 23,202.2 11,202.2" fill="#f4f400"/><text x="17" y="199.9" font-size="9" text-anchor="middle" fill="#000">1</text>
<polygon points="11,322.9 23,322.9 27.8,328.5 23,334.1 11,334.1" fill="#00e0e8"/><text x="17" y="331.8" font-size="9" text-anchor="middle" fill="#000">2</text>
<polygon points="11,459.4 23,459.4 27.8,465.0 23,470.6 11,470.6" fill="#f000e0"/><text x="17" y="468.3" font-size="9" text-anchor="middle" fill="#500050">3</text>
<polygon points="11,590.9 23,590.9 27.8,596.5 23,602.1 11,602.1" fill="#00e010"/><text x="17" y="599.8" font-size="9" text-anchor="middle" fill="#000">4</text>
<polygon points="808,193 797,193 792,198.5 797,204 808,204" fill="#f0f000"/><text x="802" y="202" font-size="9.5" text-anchor="middle" fill="#222">T</text>
<polygon points="404,116 414.5,116 414.5,124.5 409.2,130 404,124.5" fill="#ff8c00"/><text x="409.2" y="125" font-size="9.5" font-weight="bold" text-anchor="middle" fill="#7a3c00">T</text>
</g>
</svg>
<div class="abs sunk" style="left:0;top:0;width:1px;height:610px;background:#9a9a9a"></div>
<div class="abs" style="left:0;top:25px;width:801px;height:2px;background:#d8d8d8"></div>
<div class="lbl" style="left:3px;top:2px;width:48px;height:20px;line-height:20px;color:#18d018;font-size:11.500px;padding-left:8px">Trig'D</div>
<svg class="abs" style="left:132px;top:2px" width="44" height="20" viewBox="140 90 44 20"><path d="M142.5 106.5l1-1.5 1 1.5 1-1.5 1 1.5 1-1.5 1 1.5 1-1.5 1 1.5V92.5h7.5v14l1-1.5 1 1.5 1-1.5 1 1.5 1-1.5 1 1.5 1-1.5 1 1.5 1-1.5 1 1.5 1-1.5 1 1.5" fill="none" stroke="#6fd46f" stroke-width="1.2"/></svg>
<svg class="abs" style="left:337px;top:1px" width="127" height="22" viewBox="345 89 127 22">
<rect x="345" y="89" width="127" height="22" fill="#000"/>
<polyline id="zz" fill="none" stroke="#c4c4c4" stroke-width="1" points="348.0,103.0 352.0,100.4 356.7,104.8 361.5,100.4 366.2,104.8 370.9,100.4"/>
<polyline fill="none" stroke="#1c901c" stroke-width="1.100" points="370.9,100.4 375.6,104.8 380.4,100.4 385.1,104.8 389.8,100.4 394.5,104.8 399.3,100.4 404.0,104.8 408.7,100.4 413.4,104.8 418.2,100.4 422.9,104.8 427.6,100.4 432.3,104.8 437.1,100.4 441.8,104.8 446.5,100.4"/>
<polyline fill="none" stroke="#c4c4c4" stroke-width="1" points="446.5,100.4 451.2,104.8 456.0,100.4 460.7,104.8 465.4,100.4 469.0,103.8"/>
<path d="M350 96.500h-1.500v12h1.500M467.500 96.500h1.500v12h-1.500" fill="none" stroke="#70dcdc" stroke-width="1"/>
<text x="409.300" y="96.800" font-family="Liberation Sans, sans-serif" font-size="7.500" fill="#e09030" text-anchor="middle">T</text>
</svg>
<div class="lbl" style="left:704px;top:2px;width:95px;height:20px;line-height:20px;color:#f0f000;font-size:12px">
<svg class="abs" style="left:4px;top:2px" width="12" height="16" viewBox="0 0 12 16"><path d="M1 14.5h5v-13h5M3.2 9.5L6 6.2 8.8 9.5z" fill="none" stroke="#f0f000" stroke-width="1.3"/><path d="M3.2 9.5L6 6.2 8.8 9.5z" fill="#f0f000"/></svg>
<span class="abs" style="left:18px;top:3px;height:14px;line-height:14px;background:#f0f000;color:#000;padding:0 1px">CH1</span>
<span class="abs" style="left:48px;top:0">-6.27mV</span>
</div>
<!-- bottom labels -->
<div class="lbl" style="left:21px;top:590px;width:87.500px;color:#f0f000"><span class="abs" style="left:0;top:1.5px;height:14.5px;line-height:15px;background:#f0f000;color:#000;padding:0 1px 0 2px">CH1</span><span class="abs tl" style="left:28.5px">∿</span><span class="abs" style="left:43px">200mV</span></div>
<div class="lbl" style="left:125px;top:590px;width:88px;color:#20c8d0"><span class="abs" style="left:2px">CH2</span><span class="abs tl" style="left:28.5px">∿</span><span class="abs" style="left:43px">100mV</span></div>
<div class="lbl" style="left:229.500px;top:590px;width:88px;color:#d020c8"><span class="abs" style="left:2px">CH3</span><span class="abs tl" style="left:28.5px">∿</span><span class="abs" style="left:43px">200mV</span></div>
<div class="lbl" style="left:333.500px;top:590px;width:88px;color:#20c828"><span class="abs" style="left:2px">CH4</span><span class="abs tl" style="left:28.5px">∿</span><span class="abs" style="left:47px">5.00V</span></div>
<div class="lbl" style="left:697px;top:590px;width:85px;color:#f08c10"><span class="abs" style="left:2px">Time: 500.0us</span></div>

</div>
<div id="panel" class="abs">
<div class="abs" style="left:0;top:0;width:183px;height:27px;border-left:2px solid #fafafa;border-bottom:1px solid #bdbdbd"></div>
<span class="abs cj" style="left:27px;top:5px;line-height:16px">联机:</span>
<div class="abs" style="left:56.5px;top:3.5px;width:20px;height:20px;border-radius:50%;background:#ff8200;border:1px solid #d06a00"></div>
<div class="abs" style="left:2px;top:27px;width:170px;height:585px;border:1px solid #c8c8c8;border-right:none;border-bottom:none;background:#f0f0f0"></div>
<!-- scrollbar -->
<div class="abs" style="left:171px;top:27px;width:12px;height:585px;background:#e9e9eb;border-left:1px solid #dcdcdc"></div>
<svg class="abs" style="left:173px;top:34px" width="8" height="6" viewBox="0 0 8 6"><path d="M.500 5L4 1.200 7.500 5z" fill="#5a5a5a"/></svg>
<div class="abs" style="left:172px;top:47px;width:11px;height:426px;border:1px solid #b5b5b8;border-radius:2px;background:linear-gradient(90deg,#f6f6f7,#e4e4e8 50%,#d4d4da)"></div>
<div class="abs" style="left:174px;top:255px;width:7px;height:9px;background:repeating-linear-gradient(180deg,#777 0,#777 1px,transparent 1px,transparent 2.5px)"></div>
<!-- group 水平 -->
<div class="grp" style="left:8px;top:39px;width:157px;height:103px"></div>
<span class="gl cj" style="left:14px;top:30px">水平</span>
<span class="abs cj" style="left:10px;top:50px;line-height:16px;word-spacing:-1.500px">秒 <span style="color:#335">/</span> 格</span>
<div class="combo" style="left:10px;top:69.5px"><span>500.0us</span><i></i></div>
<span class="abs cj" style="left:10px;top:95px;line-height:16px">格式</span>
<div class="combo" style="left:10px;top:116px"><span>Y - T</span><i></i></div>
<svg class="abs" style="left:79.600px;top:59.400px" width="82" height="82" viewBox="-41 -41 82 82">
<defs><linearGradient id="ring" x1="0" y1="0" x2="0.7" y2="1"><stop offset="0" stop-color="#e4e4e4"/><stop offset="0.5" stop-color="#a8a8a8"/><stop offset="1" stop-color="#6c6c6c"/></linearGradient></defs>
<path d="M-25.5 25.5A36 36 0 1 1 25.5 25.500" fill="none" stroke="#444" stroke-width="1"/>
<path d="M-24 24l-6.500 6.500M24 24l6.500 6.500" stroke="#111" stroke-width="1.4"/>
<circle r="33.5" fill="url(#ring)"/>
<circle r="28" fill="#0a0a8a"/>
<circle r="26.500" fill="#0000d0"/>
<path d="M5 -21.500L1.500 -6" stroke="#fff" stroke-width="1.500"/>
</svg>
<!-- group 垂直 -->
<div class="grp" style="left:8px;top:157.500px;width:157px;height:141px"></div>
<span class="gl cj" style="left:14px;top:147.500px">垂直</span>
<div class="combo" style="left:10px;top:172px"><span>CH1</span><i></i></div>
<div class="abs" style="left:79px;top:173.500px;width:13px;height:13px;border:1px solid #8e8f8f;background:linear-gradient(135deg,#e8e8ea,#fff)"><svg class="abs" style="left:1px;top:1px" width="10" height="10" viewBox="0 0 10 10"><path d="M1.500 4.500L4 8 8.500 1" fill="none" stroke="#3a58b8" stroke-width="1.800"/></svg></div>
<span class="abs cj" style="left:94.500px;top:173px;line-height:16px">开/关</span>
<div class="abs" style="left:10px;top:198.500px;width:65px;height:19px;border:1px solid #dcdcdc;background:#f9f9f9;border-radius:2px"><span class="abs" style="left:4px;top:1px;line-height:16px;font-size:10.500px;letter-spacing:-.2px;color:#222">200mV</span>
<div class="abs" style="left:48px;top:0;width:15px;height:17px;border:1px solid #c8c8c8;background:#f0f0f0"><svg width="13" height="15" viewBox="0 0 13 15"><path d="M0 7.500h13" stroke="#c8c8c8"/><path d="M4 5.500L6.500 2.500 9 5.500zM4 9.500L6.500 12.500 9 9.500z" fill="#6878b8"/></svg></div></div>
<div class="combo cj" style="left:10px;top:224.500px"><span>交流</span><i></i></div>
<div class="combo" style="left:10px;top:251px"><span>x1</span><i></i></div>
<svg class="abs" style="left:80.300px;top:192.200px" width="82" height="82" viewBox="-41 -41 82 82">
<path d="M-25.500 25.500A36 36 0 1 1 25.500 25.500" fill="none" stroke="#444" stroke-width="1"/>
<path d="M-24 24l-6.500 6.500M24 24l6.500 6.500" stroke="#111" stroke-width="1.400"/>
<circle r="33.500" fill="url(#ring)"/>
<circle r="28" fill="#8c8c10"/>
<circle r="26.500" fill="#ffff00"/>
<path d="M-5.500 -21.300L-1.500 -7.600" stroke="#ffff9c" stroke-width="1.300"/>
</svg>
<!-- group 触发 -->
<div class="grp" style="left:8px;top:312px;width:157px;height:225px"></div>
<span class="gl cj" style="left:14px;top:302px">触发</span>
<span class="abs cj" style="left:9px;top:327px;line-height:16px">触发模式</span>
<div class="combo cj" style="left:93px;top:324.500px;width:64px"><span>边沿</span><i></i></div>
<span class="abs cj" style="left:9px;top:355px;line-height:16px">触发方式</span>
<div class="combo cj" style="left:93px;top:353px;width:64px"><span>自动</span><i></i></div>
<span class="abs cj" style="left:9px;top:383px;line-height:16px">触发信源</span>
<div class="combo" style="left:93px;top:381.500px;width:64px"><span>CH1</span><i></i></div>
<span class="abs cj" style="left:9px;top:411px;line-height:16px">边沿类型</span>
<div class="combo" style="left:93px;top:411px;width:64px"><span>+</span><i></i></div>
<!-- group 波形移动 -->
<div class="grp" style="left:3px;top:576.500px;width:158px;height:40px;border-left:none"></div>
<span class="gl cj" style="left:9px;top:567px">波形移动</span>
<span class="abs cj" style="left:4px;top:585px;line-height:16px;color:#a8a8a8">数据长度</span>
<div class="abs" style="left:87.500px;top:582px;width:64px;height:17.500px;border:1px solid #c4c4c4;background:#f2f2f2;text-align:center;line-height:15px;font-size:11px;color:#a8a8a8">4096</div>

</div>
<div id="status" class="abs">
<span class="abs" style="left:1px;top:4px;line-height:16px;font-size:11.500px;font-weight:400">已连接</span>
<span class="abs" style="left:869px;top:4.500px;line-height:16px">22-02-2016</span>
<span class="abs" style="left:939px;top:4.500px;line-height:16px">10:41</span>
</div>
<!-- app icons -->
<svg class="abs" style="left:9px;top:7px" width="14" height="15" viewBox="0 0 14 15"><rect x=".5" y=".5" width="12.500" height="10" rx="1" fill="#3c4238" stroke="#8a9096" stroke-width="1"/><path d="M2 5.500h3l1-3 1 5.500 1-2.500h3.500" fill="none" stroke="#7ed03a" stroke-width="1.100"/><path d="M0 12h14" stroke="#30343c" stroke-width="1.200"/><path d="M4 13.500h6" stroke="#c8ccd4" stroke-width="1"/></svg>
<svg class="abs" style="left:15px;top:30px" width="14" height="15" viewBox="0 0 14 15"><rect x=".5" y=".5" width="12.500" height="10" rx="1" fill="#3c4238" stroke="#8a9096" stroke-width="1"/><path d="M2 5.500h3l1-3 1 5.500 1-2.500h3.500" fill="none" stroke="#7ed03a" stroke-width="1.100"/><path d="M0 12h14" stroke="#30343c" stroke-width="1.200"/><path d="M4 13.500h6" stroke="#a8acb4" stroke-width="1"/></svg>
<!-- caption buttons -->
<div class="abs" style="left:896px;top:0;width:97px;height:19px;border:1px solid #20304c;border-top:none;border-radius:0 0 5px 5px;overflow:hidden;box-shadow:0 0 0 1px rgba(255,255,255,.35)">
<div class="abs" style="left:0;top:0;width:27px;height:18px;background:linear-gradient(180deg,#9db8d8 0,#7a9cc6 45%,#446fa6 50%,#6890c2 100%);border-right:1px solid #20304c"></div>
<div class="abs" style="left:27px;top:0;width:25px;height:18px;background:linear-gradient(180deg,#9db8d8 0,#7a9cc6 45%,#446fa6 50%,#6890c2 100%);border-right:1px solid #20304c"></div>
<div class="abs" style="left:52px;top:0;width:44px;height:18px;background:linear-gradient(180deg,#e2ac9e 0,#d07c68 45%,#b93c24 50%,#c65c42 100%)"></div>
<svg class="abs" style="left:0;top:0" width="96" height="18" viewBox="896 0 96 18"><rect x="905.500" y="10.500" width="10" height="3" fill="#fff" stroke="#404858" stroke-width=".8"/><path d="M930.500 5.500h11v8h-11zM933.500 8.500h5v2h-5z" fill="#fff" fill-rule="evenodd" stroke="#404858" stroke-width=".8"/><g stroke-linecap="butt"><path d="M968.200 6.200l6.600 7M974.800 6.200l-6.600 7" stroke="#50281c" stroke-width="3.600"/><path d="M968.200 6.200l6.600 7M974.800 6.200l-6.600 7" stroke="#fff" stroke-width="2.400"/></g></svg>
</div>
<!-- MDI buttons -->
<div class="mdi" style="left:940px"><svg width="14" height="14" viewBox="0 0 14 14"><path d="M4 10.500h6" stroke="#768094" stroke-width="2"/></svg></div>
<div class="mdi" style="left:957.500px"><svg width="14" height="14" viewBox="0 0 14 14"><path d="M5.500 3.500h5v4h-5zM3.500 6.500h5v4h-5z" fill="#eef0f6" stroke="#768094" stroke-width="1"/><path d="M5 3.800h6M3 6.800h6" stroke="#768094" stroke-width="1.600"/></svg></div>
<div class="mdi" style="left:975px"><svg width="14" height="14" viewBox="0 0 14 14"><path d="M3.500 3.500l7 7M10.500 3.500l-7 7" stroke="#768094" stroke-width="1.800"/></svg></div>
<!-- status bar bits -->
<div class="abs" style="left:871px;top:701px;width:1px;height:16px;background:#d8d8d8;border-right:1px solid #fff"></div>
<svg class="abs" style="left:980px;top:706px" width="11" height="11" viewBox="0 0 11 11"><g fill="#b8b8b8"><rect x="8" y="8" width="2" height="2"/><rect x="8" y="4" width="2" height="2"/><rect x="4" y="8" width="2" height="2"/><rect x="8" y="0" width="2" height="2"/><rect x="4" y="4" width="2" height="2"/><rect x="0" y="8" width="2" height="2"/></g></svg>

<div class="abs" style="left:0;top:0;width:1000px;height:726px;border:1px solid #1b2c48;border-radius:8px 8px 7px 7px;box-shadow:inset 0 1px 0 rgba(255,255,255,.5)"></div>
</div>
</body>
</html>
